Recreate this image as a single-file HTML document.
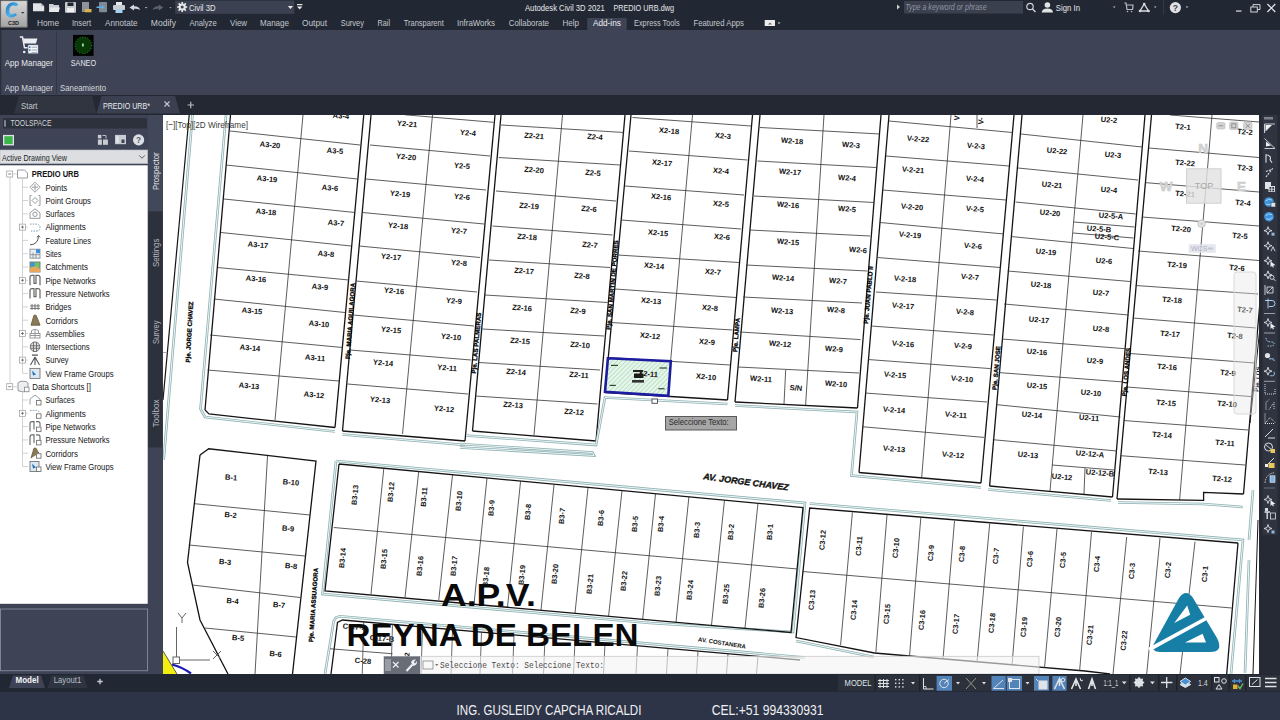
<!DOCTYPE html>
<html><head><meta charset="utf-8"><style>
*{margin:0;padding:0;box-sizing:border-box}
html,body{width:1280px;height:720px;overflow:hidden;background:#22262f;font-family:"Liberation Sans",sans-serif}
.abs{position:absolute}
#title{position:absolute;left:0;top:0;width:1280px;height:30px;background:#222833}
#ribbon{position:absolute;left:0;top:30px;width:1280px;height:64.5px;background:#3e4356}
#tabrow{position:absolute;left:0;top:94.5px;width:1280px;height:20.5px;background:#232833}
#tsp{position:absolute;left:0;top:115px;width:163px;height:559px;background:#3e4356}
.ticon{position:absolute;width:11px;height:10px;border:1px solid #8a8f98;background:#eef1f4;border-radius:1px}
.ticon2{position:absolute;width:11px;height:12px;border:1px solid #8a8f98;background:#fafafa}
.hl{position:absolute;width:5px;height:0;border-top:1px solid #bbb}
.pbox{position:absolute;width:7px;height:7px;border:1px solid #999;background:#fff}
#draw{position:absolute;left:163px;top:115px;width:1096px;height:559px;background:#fff;overflow:hidden}
#rtool{position:absolute;left:1259px;top:115px;width:21px;height:559px;background:#2b2f3a}
#status{position:absolute;left:0;top:674px;width:1280px;height:18px;background:#252932}
#footer{position:absolute;left:0;top:692px;width:1280px;height:28px;background:#2d3343}
</style></head><body>
<div id="title"></div>
<div id="ribbon"></div>
<div id="tabrow"></div>
<div id="tsp"></div>
<div id="draw">
<svg width="1096" height="559" viewBox="163 115 1096 559" style="position:absolute;left:0;top:0;font-family:'Liberation Sans',sans-serif">
<line x1="189.2" y1="115" x2="163" y2="400" stroke="#141414" stroke-width="1.2"/>
<line x1="192.5" y1="115" x2="163.7" y2="460" stroke="#93b0b2" stroke-width="2.6"/>
<line x1="192.5" y1="115" x2="163.7" y2="460" stroke="#e6f7f7" stroke-width="1.0"/>
<line x1="163" y1="352.5" x2="167.5" y2="352.5" stroke="#888" stroke-width="0.7"/>
<line x1="230.5" y1="115" x2="205" y2="410" stroke="#141414" stroke-width="1.3"/>
<line x1="363.75" y1="115" x2="335" y2="427.5" stroke="#141414" stroke-width="1.3"/>
<line x1="303" y1="115" x2="275" y2="420" stroke="#333" stroke-width="0.8"/>
<line x1="230" y1="131" x2="360" y2="145" stroke="#333" stroke-width="0.8"/>
<line x1="226" y1="165" x2="357.5" y2="179" stroke="#333" stroke-width="0.8"/>
<line x1="224" y1="199" x2="355" y2="212.5" stroke="#333" stroke-width="0.8"/>
<line x1="221" y1="232.5" x2="351" y2="246" stroke="#333" stroke-width="0.8"/>
<line x1="217.5" y1="267.5" x2="349" y2="280" stroke="#333" stroke-width="0.8"/>
<line x1="213.75" y1="299" x2="345" y2="312.5" stroke="#333" stroke-width="0.8"/>
<line x1="210" y1="335" x2="342.5" y2="347.5" stroke="#333" stroke-width="0.8"/>
<line x1="207.5" y1="370" x2="339" y2="381" stroke="#333" stroke-width="0.8"/>
<polyline points="205,410 209,414 335,427.5" fill="none" stroke="#141414" stroke-width="1.3"/>
<polyline points="226,115 200.5,409 205,417 335,431.5" fill="none" stroke="#93b0b2" stroke-width="2.6" stroke-linejoin="miter"/>
<polyline points="226,115 200.5,409 205,417 335,431.5" fill="none" stroke="#e6f7f7" stroke-width="1.0" stroke-linejoin="miter"/>
<text x="270" y="145" transform="rotate(5 270 145)" font-size="7.6" font-weight="bold" fill="#111" text-anchor="middle" dominant-baseline="central" >A3-20</text>
<text x="267" y="179" transform="rotate(5 267 179)" font-size="7.6" font-weight="bold" fill="#111" text-anchor="middle" dominant-baseline="central" >A3-19</text>
<text x="266" y="212" transform="rotate(5 266 212)" font-size="7.6" font-weight="bold" fill="#111" text-anchor="middle" dominant-baseline="central" >A3-18</text>
<text x="258" y="245" transform="rotate(5 258 245)" font-size="7.6" font-weight="bold" fill="#111" text-anchor="middle" dominant-baseline="central" >A3-17</text>
<text x="256" y="279" transform="rotate(5 256 279)" font-size="7.6" font-weight="bold" fill="#111" text-anchor="middle" dominant-baseline="central" >A3-16</text>
<text x="252" y="311" transform="rotate(5 252 311)" font-size="7.6" font-weight="bold" fill="#111" text-anchor="middle" dominant-baseline="central" >A3-15</text>
<text x="250" y="348" transform="rotate(5 250 348)" font-size="7.6" font-weight="bold" fill="#111" text-anchor="middle" dominant-baseline="central" >A3-14</text>
<text x="249" y="386" transform="rotate(5 249 386)" font-size="7.6" font-weight="bold" fill="#111" text-anchor="middle" dominant-baseline="central" >A3-13</text>
<text x="341" y="116" transform="rotate(5 341 116)" font-size="7.6" font-weight="bold" fill="#111" text-anchor="middle" dominant-baseline="central" >A3-4</text>
<text x="335" y="151" transform="rotate(5 335 151)" font-size="7.6" font-weight="bold" fill="#111" text-anchor="middle" dominant-baseline="central" >A3-5</text>
<text x="330" y="188" transform="rotate(5 330 188)" font-size="7.6" font-weight="bold" fill="#111" text-anchor="middle" dominant-baseline="central" >A3-6</text>
<text x="336" y="223" transform="rotate(5 336 223)" font-size="7.6" font-weight="bold" fill="#111" text-anchor="middle" dominant-baseline="central" >A3-7</text>
<text x="326" y="254" transform="rotate(5 326 254)" font-size="7.6" font-weight="bold" fill="#111" text-anchor="middle" dominant-baseline="central" >A3-8</text>
<text x="320" y="287" transform="rotate(5 320 287)" font-size="7.6" font-weight="bold" fill="#111" text-anchor="middle" dominant-baseline="central" >A3-9</text>
<text x="319" y="324" transform="rotate(5 319 324)" font-size="7.6" font-weight="bold" fill="#111" text-anchor="middle" dominant-baseline="central" >A3-10</text>
<text x="315" y="358" transform="rotate(5 315 358)" font-size="7.6" font-weight="bold" fill="#111" text-anchor="middle" dominant-baseline="central" >A3-11</text>
<text x="314" y="395" transform="rotate(5 314 395)" font-size="7.6" font-weight="bold" fill="#111" text-anchor="middle" dominant-baseline="central" >A3-12</text>
<line x1="371" y1="115" x2="342.5" y2="431" stroke="#141414" stroke-width="1.3"/>
<line x1="495" y1="115" x2="465" y2="441" stroke="#141414" stroke-width="1.3"/>
<line x1="432.5" y1="115" x2="402.5" y2="434" stroke="#333" stroke-width="0.8"/>
<line x1="405" y1="114.8" x2="493.4" y2="122.3" stroke="#333" stroke-width="0.8"/>
<line x1="370" y1="145" x2="490" y2="156" stroke="#333" stroke-width="0.8"/>
<line x1="366" y1="179" x2="486" y2="190" stroke="#333" stroke-width="0.8"/>
<line x1="362.5" y1="212.5" x2="484" y2="224" stroke="#333" stroke-width="0.8"/>
<line x1="359" y1="246" x2="480" y2="257.5" stroke="#333" stroke-width="0.8"/>
<line x1="356" y1="281" x2="477" y2="292" stroke="#333" stroke-width="0.8"/>
<line x1="353" y1="315" x2="474" y2="326" stroke="#333" stroke-width="0.8"/>
<line x1="350" y1="350" x2="471" y2="360" stroke="#333" stroke-width="0.8"/>
<line x1="347.5" y1="384" x2="468" y2="394" stroke="#333" stroke-width="0.8"/>
<polyline points="342.5,431 465,441" fill="none" stroke="#141414" stroke-width="1.3"/>
<polyline points="342.5,434.5 465,445" fill="none" stroke="#93b0b2" stroke-width="2.6" stroke-linejoin="miter"/>
<polyline points="342.5,434.5 465,445" fill="none" stroke="#e6f7f7" stroke-width="1.0" stroke-linejoin="miter"/>
<text x="407" y="124" transform="rotate(5 407 124)" font-size="7.6" font-weight="bold" fill="#111" text-anchor="middle" dominant-baseline="central" >Y2-21</text>
<text x="468" y="133" transform="rotate(5 468 133)" font-size="7.6" font-weight="bold" fill="#111" text-anchor="middle" dominant-baseline="central" >Y2-4</text>
<text x="406" y="157" transform="rotate(5 406 157)" font-size="7.6" font-weight="bold" fill="#111" text-anchor="middle" dominant-baseline="central" >Y2-20</text>
<text x="462" y="166" transform="rotate(5 462 166)" font-size="7.6" font-weight="bold" fill="#111" text-anchor="middle" dominant-baseline="central" >Y2-5</text>
<text x="400" y="194" transform="rotate(5 400 194)" font-size="7.6" font-weight="bold" fill="#111" text-anchor="middle" dominant-baseline="central" >Y2-19</text>
<text x="462" y="197" transform="rotate(5 462 197)" font-size="7.6" font-weight="bold" fill="#111" text-anchor="middle" dominant-baseline="central" >Y2-6</text>
<text x="398" y="226" transform="rotate(5 398 226)" font-size="7.6" font-weight="bold" fill="#111" text-anchor="middle" dominant-baseline="central" >Y2-18</text>
<text x="459" y="231" transform="rotate(5 459 231)" font-size="7.6" font-weight="bold" fill="#111" text-anchor="middle" dominant-baseline="central" >Y2-7</text>
<text x="391" y="257" transform="rotate(5 391 257)" font-size="7.6" font-weight="bold" fill="#111" text-anchor="middle" dominant-baseline="central" >Y2-17</text>
<text x="459" y="263" transform="rotate(5 459 263)" font-size="7.6" font-weight="bold" fill="#111" text-anchor="middle" dominant-baseline="central" >Y2-8</text>
<text x="394" y="291" transform="rotate(5 394 291)" font-size="7.6" font-weight="bold" fill="#111" text-anchor="middle" dominant-baseline="central" >Y2-16</text>
<text x="454" y="301" transform="rotate(5 454 301)" font-size="7.6" font-weight="bold" fill="#111" text-anchor="middle" dominant-baseline="central" >Y2-9</text>
<text x="391" y="330" transform="rotate(5 391 330)" font-size="7.6" font-weight="bold" fill="#111" text-anchor="middle" dominant-baseline="central" >Y2-15</text>
<text x="451" y="337" transform="rotate(5 451 337)" font-size="7.6" font-weight="bold" fill="#111" text-anchor="middle" dominant-baseline="central" >Y2-10</text>
<text x="383" y="363" transform="rotate(5 383 363)" font-size="7.6" font-weight="bold" fill="#111" text-anchor="middle" dominant-baseline="central" >Y2-14</text>
<text x="447" y="368" transform="rotate(5 447 368)" font-size="7.6" font-weight="bold" fill="#111" text-anchor="middle" dominant-baseline="central" >Y2-11</text>
<text x="380" y="400" transform="rotate(5 380 400)" font-size="7.6" font-weight="bold" fill="#111" text-anchor="middle" dominant-baseline="central" >Y2-13</text>
<text x="444" y="409" transform="rotate(5 444 409)" font-size="7.6" font-weight="bold" fill="#111" text-anchor="middle" dominant-baseline="central" >Y2-12</text>
<line x1="501" y1="115" x2="472.5" y2="431" stroke="#141414" stroke-width="1.3"/>
<line x1="625" y1="115" x2="596" y2="441" stroke="#141414" stroke-width="1.3"/>
<line x1="562.5" y1="115" x2="534" y2="435" stroke="#333" stroke-width="0.8"/>
<line x1="501" y1="125" x2="624" y2="132.5" stroke="#333" stroke-width="0.8"/>
<line x1="498.75" y1="157.5" x2="620" y2="165" stroke="#333" stroke-width="0.8"/>
<line x1="496" y1="191" x2="616" y2="201" stroke="#333" stroke-width="0.8"/>
<line x1="492.5" y1="226" x2="612.5" y2="235" stroke="#333" stroke-width="0.8"/>
<line x1="489" y1="260" x2="610" y2="267.5" stroke="#333" stroke-width="0.8"/>
<line x1="485" y1="295" x2="607.5" y2="302.5" stroke="#333" stroke-width="0.8"/>
<line x1="482.5" y1="329" x2="604" y2="336" stroke="#333" stroke-width="0.8"/>
<line x1="479" y1="362.5" x2="600" y2="370" stroke="#333" stroke-width="0.8"/>
<line x1="475" y1="396" x2="597.5" y2="404" stroke="#333" stroke-width="0.8"/>
<polyline points="472.5,431 596,441" fill="none" stroke="#141414" stroke-width="1.3"/>
<polyline points="466,435.5 596,445 605,397.5 727.5,404" fill="none" stroke="#93b0b2" stroke-width="2.6" stroke-linejoin="miter"/>
<polyline points="466,435.5 596,445 605,397.5 727.5,404" fill="none" stroke="#e6f7f7" stroke-width="1.0" stroke-linejoin="miter"/>
<polyline points="460,444 592.5,452.5 594,455.5 460,447.5" fill="none" stroke="#93b0b2" stroke-width="2.6" stroke-linejoin="miter"/>
<polyline points="460,444 592.5,452.5 594,455.5 460,447.5" fill="none" stroke="#e6f7f7" stroke-width="1.0" stroke-linejoin="miter"/>
<text x="534" y="136" transform="rotate(5 534 136)" font-size="7.6" font-weight="bold" fill="#111" text-anchor="middle" dominant-baseline="central" >Z2-21</text>
<text x="595" y="137" transform="rotate(5 595 137)" font-size="7.6" font-weight="bold" fill="#111" text-anchor="middle" dominant-baseline="central" >Z2-4</text>
<text x="534" y="170" transform="rotate(5 534 170)" font-size="7.6" font-weight="bold" fill="#111" text-anchor="middle" dominant-baseline="central" >Z2-20</text>
<text x="593" y="173" transform="rotate(5 593 173)" font-size="7.6" font-weight="bold" fill="#111" text-anchor="middle" dominant-baseline="central" >Z2-5</text>
<text x="529" y="206" transform="rotate(5 529 206)" font-size="7.6" font-weight="bold" fill="#111" text-anchor="middle" dominant-baseline="central" >Z2-19</text>
<text x="589" y="209" transform="rotate(5 589 209)" font-size="7.6" font-weight="bold" fill="#111" text-anchor="middle" dominant-baseline="central" >Z2-6</text>
<text x="527" y="237" transform="rotate(5 527 237)" font-size="7.6" font-weight="bold" fill="#111" text-anchor="middle" dominant-baseline="central" >Z2-18</text>
<text x="590" y="245" transform="rotate(5 590 245)" font-size="7.6" font-weight="bold" fill="#111" text-anchor="middle" dominant-baseline="central" >Z2-7</text>
<text x="524" y="271" transform="rotate(5 524 271)" font-size="7.6" font-weight="bold" fill="#111" text-anchor="middle" dominant-baseline="central" >Z2-17</text>
<text x="582" y="276" transform="rotate(5 582 276)" font-size="7.6" font-weight="bold" fill="#111" text-anchor="middle" dominant-baseline="central" >Z2-8</text>
<text x="522" y="308" transform="rotate(5 522 308)" font-size="7.6" font-weight="bold" fill="#111" text-anchor="middle" dominant-baseline="central" >Z2-16</text>
<text x="578" y="311" transform="rotate(5 578 311)" font-size="7.6" font-weight="bold" fill="#111" text-anchor="middle" dominant-baseline="central" >Z2-9</text>
<text x="520" y="341" transform="rotate(5 520 341)" font-size="7.6" font-weight="bold" fill="#111" text-anchor="middle" dominant-baseline="central" >Z2-15</text>
<text x="580" y="345" transform="rotate(5 580 345)" font-size="7.6" font-weight="bold" fill="#111" text-anchor="middle" dominant-baseline="central" >Z2-10</text>
<text x="516" y="372" transform="rotate(5 516 372)" font-size="7.6" font-weight="bold" fill="#111" text-anchor="middle" dominant-baseline="central" >Z2-14</text>
<text x="579" y="375" transform="rotate(5 579 375)" font-size="7.6" font-weight="bold" fill="#111" text-anchor="middle" dominant-baseline="central" >Z2-11</text>
<text x="513" y="405" transform="rotate(5 513 405)" font-size="7.6" font-weight="bold" fill="#111" text-anchor="middle" dominant-baseline="central" >Z2-13</text>
<text x="574" y="412" transform="rotate(5 574 412)" font-size="7.6" font-weight="bold" fill="#111" text-anchor="middle" dominant-baseline="central" >Z2-12</text>
<line x1="631" y1="115" x2="605" y2="392.5" stroke="#141414" stroke-width="1.3"/>
<line x1="752.5" y1="115" x2="727.5" y2="400" stroke="#141414" stroke-width="1.3"/>
<line x1="692.5" y1="115" x2="667.5" y2="396" stroke="#333" stroke-width="0.8"/>
<line x1="632.5" y1="117.5" x2="751" y2="126" stroke="#333" stroke-width="0.8"/>
<line x1="629" y1="151" x2="747.5" y2="160" stroke="#333" stroke-width="0.8"/>
<line x1="625" y1="186" x2="744" y2="195" stroke="#333" stroke-width="0.8"/>
<line x1="621" y1="220" x2="741" y2="229" stroke="#333" stroke-width="0.8"/>
<line x1="617.5" y1="255" x2="739" y2="262.5" stroke="#333" stroke-width="0.8"/>
<line x1="615" y1="289" x2="736" y2="297.5" stroke="#333" stroke-width="0.8"/>
<line x1="611" y1="322.5" x2="732.5" y2="330" stroke="#333" stroke-width="0.8"/>
<line x1="609" y1="357.5" x2="730" y2="365" stroke="#333" stroke-width="0.8"/>
<polyline points="605,392.5 727.5,400" fill="none" stroke="#141414" stroke-width="1.3"/>
<text x="669" y="131" transform="rotate(5 669 131)" font-size="7.6" font-weight="bold" fill="#111" text-anchor="middle" dominant-baseline="central" >X2-18</text>
<text x="723" y="136" transform="rotate(5 723 136)" font-size="7.6" font-weight="bold" fill="#111" text-anchor="middle" dominant-baseline="central" >X2-3</text>
<text x="662" y="163" transform="rotate(5 662 163)" font-size="7.6" font-weight="bold" fill="#111" text-anchor="middle" dominant-baseline="central" >X2-17</text>
<text x="721" y="171" transform="rotate(5 721 171)" font-size="7.6" font-weight="bold" fill="#111" text-anchor="middle" dominant-baseline="central" >X2-4</text>
<text x="661" y="197" transform="rotate(5 661 197)" font-size="7.6" font-weight="bold" fill="#111" text-anchor="middle" dominant-baseline="central" >X2-16</text>
<text x="721" y="204" transform="rotate(5 721 204)" font-size="7.6" font-weight="bold" fill="#111" text-anchor="middle" dominant-baseline="central" >X2-5</text>
<text x="658" y="233" transform="rotate(5 658 233)" font-size="7.6" font-weight="bold" fill="#111" text-anchor="middle" dominant-baseline="central" >X2-15</text>
<text x="722" y="237" transform="rotate(5 722 237)" font-size="7.6" font-weight="bold" fill="#111" text-anchor="middle" dominant-baseline="central" >X2-6</text>
<text x="654" y="266" transform="rotate(5 654 266)" font-size="7.6" font-weight="bold" fill="#111" text-anchor="middle" dominant-baseline="central" >X2-14</text>
<text x="713" y="272" transform="rotate(5 713 272)" font-size="7.6" font-weight="bold" fill="#111" text-anchor="middle" dominant-baseline="central" >X2-7</text>
<text x="651" y="301" transform="rotate(5 651 301)" font-size="7.6" font-weight="bold" fill="#111" text-anchor="middle" dominant-baseline="central" >X2-13</text>
<text x="710" y="308" transform="rotate(5 710 308)" font-size="7.6" font-weight="bold" fill="#111" text-anchor="middle" dominant-baseline="central" >X2-8</text>
<text x="650" y="336" transform="rotate(5 650 336)" font-size="7.6" font-weight="bold" fill="#111" text-anchor="middle" dominant-baseline="central" >X2-12</text>
<text x="707" y="342" transform="rotate(5 707 342)" font-size="7.6" font-weight="bold" fill="#111" text-anchor="middle" dominant-baseline="central" >X2-9</text>
<text x="706" y="377" transform="rotate(5 706 377)" font-size="7.6" font-weight="bold" fill="#111" text-anchor="middle" dominant-baseline="central" >X2-10</text>
<line x1="760" y1="115" x2="735" y2="402" stroke="#141414" stroke-width="1.3"/>
<line x1="881" y1="115" x2="857.5" y2="408" stroke="#141414" stroke-width="1.3"/>
<line x1="824" y1="115" x2="805.6" y2="405" stroke="#333" stroke-width="0.8"/>
<line x1="760" y1="127.5" x2="880" y2="134" stroke="#333" stroke-width="0.8"/>
<line x1="757.5" y1="161" x2="876" y2="167.5" stroke="#333" stroke-width="0.8"/>
<line x1="754" y1="196" x2="874" y2="202.5" stroke="#333" stroke-width="0.8"/>
<line x1="750" y1="230" x2="870" y2="236" stroke="#333" stroke-width="0.8"/>
<line x1="746" y1="265" x2="867.5" y2="271" stroke="#333" stroke-width="0.8"/>
<line x1="743" y1="297" x2="862" y2="303" stroke="#333" stroke-width="0.8"/>
<line x1="740" y1="332" x2="860.6" y2="339.6" stroke="#333" stroke-width="0.8"/>
<line x1="738" y1="367" x2="859" y2="373" stroke="#333" stroke-width="0.8"/>
<polyline points="735,402 857.5,408" fill="none" stroke="#141414" stroke-width="1.3"/>
<line x1="785.7" y1="370" x2="784" y2="404" stroke="#333" stroke-width="0.8"/>
<polyline points="735,405.5 857,412 851.5,475.5 981,487.5" fill="none" stroke="#93b0b2" stroke-width="2.6" stroke-linejoin="miter"/>
<polyline points="735,405.5 857,412 851.5,475.5 981,487.5" fill="none" stroke="#e6f7f7" stroke-width="1.0" stroke-linejoin="miter"/>
<text x="792" y="141" transform="rotate(5 792 141)" font-size="7.6" font-weight="bold" fill="#111" text-anchor="middle" dominant-baseline="central" >W2-18</text>
<text x="851" y="145" transform="rotate(5 851 145)" font-size="7.6" font-weight="bold" fill="#111" text-anchor="middle" dominant-baseline="central" >W2-3</text>
<text x="790" y="172" transform="rotate(5 790 172)" font-size="7.6" font-weight="bold" fill="#111" text-anchor="middle" dominant-baseline="central" >W2-17</text>
<text x="847" y="178" transform="rotate(5 847 178)" font-size="7.6" font-weight="bold" fill="#111" text-anchor="middle" dominant-baseline="central" >W2-4</text>
<text x="788" y="205" transform="rotate(5 788 205)" font-size="7.6" font-weight="bold" fill="#111" text-anchor="middle" dominant-baseline="central" >W2-16</text>
<text x="847" y="209" transform="rotate(5 847 209)" font-size="7.6" font-weight="bold" fill="#111" text-anchor="middle" dominant-baseline="central" >W2-5</text>
<text x="788" y="242" transform="rotate(5 788 242)" font-size="7.6" font-weight="bold" fill="#111" text-anchor="middle" dominant-baseline="central" >W2-15</text>
<text x="858" y="250" transform="rotate(5 858 250)" font-size="7.6" font-weight="bold" fill="#111" text-anchor="middle" dominant-baseline="central" >W2-6</text>
<text x="783" y="278" transform="rotate(5 783 278)" font-size="7.6" font-weight="bold" fill="#111" text-anchor="middle" dominant-baseline="central" >W2-14</text>
<text x="838" y="281" transform="rotate(5 838 281)" font-size="7.6" font-weight="bold" fill="#111" text-anchor="middle" dominant-baseline="central" >W2-7</text>
<text x="782" y="311" transform="rotate(5 782 311)" font-size="7.6" font-weight="bold" fill="#111" text-anchor="middle" dominant-baseline="central" >W2-13</text>
<text x="836" y="310" transform="rotate(5 836 310)" font-size="7.6" font-weight="bold" fill="#111" text-anchor="middle" dominant-baseline="central" >W2-8</text>
<text x="780" y="344" transform="rotate(5 780 344)" font-size="7.6" font-weight="bold" fill="#111" text-anchor="middle" dominant-baseline="central" >W2-12</text>
<text x="834" y="349" transform="rotate(5 834 349)" font-size="7.6" font-weight="bold" fill="#111" text-anchor="middle" dominant-baseline="central" >W2-9</text>
<text x="761" y="379" transform="rotate(5 761 379)" font-size="7.6" font-weight="bold" fill="#111" text-anchor="middle" dominant-baseline="central" >W2-11</text>
<text x="796" y="388" transform="rotate(5 796 388)" font-size="7.6" font-weight="bold" fill="#111" text-anchor="middle" dominant-baseline="central" >S/N</text>
<text x="836" y="384" transform="rotate(5 836 384)" font-size="7.6" font-weight="bold" fill="#111" text-anchor="middle" dominant-baseline="central" >W2-10</text>
<line x1="889" y1="115" x2="859" y2="472.5" stroke="#141414" stroke-width="1.3"/>
<line x1="1014" y1="115" x2="981" y2="483" stroke="#141414" stroke-width="1.3"/>
<line x1="951" y1="115" x2="921.7" y2="477" stroke="#333" stroke-width="0.8"/>
<line x1="889" y1="121" x2="1012.5" y2="132.5" stroke="#333" stroke-width="0.8"/>
<line x1="886" y1="156" x2="1009" y2="166" stroke="#333" stroke-width="0.8"/>
<line x1="882.5" y1="190" x2="1006" y2="200" stroke="#333" stroke-width="0.8"/>
<line x1="880" y1="222.5" x2="1004" y2="234" stroke="#333" stroke-width="0.8"/>
<line x1="877.5" y1="257.5" x2="1000" y2="267.5" stroke="#333" stroke-width="0.8"/>
<line x1="876" y1="292" x2="996.6" y2="300" stroke="#333" stroke-width="0.8"/>
<line x1="871" y1="326" x2="993.5" y2="335" stroke="#333" stroke-width="0.8"/>
<line x1="868" y1="359.5" x2="990.5" y2="368.6" stroke="#333" stroke-width="0.8"/>
<line x1="865" y1="393" x2="987" y2="402" stroke="#333" stroke-width="0.8"/>
<line x1="862" y1="426.7" x2="984" y2="437.4" stroke="#333" stroke-width="0.8"/>
<polyline points="859,472.5 981,483" fill="none" stroke="#141414" stroke-width="1.3"/>
<line x1="977" y1="115" x2="977" y2="128" stroke="#333" stroke-width="0.8"/>
<text x="918" y="139" transform="rotate(5 918 139)" font-size="7.6" font-weight="bold" fill="#111" text-anchor="middle" dominant-baseline="central" >V-2-22</text>
<text x="976" y="146" transform="rotate(5 976 146)" font-size="7.6" font-weight="bold" fill="#111" text-anchor="middle" dominant-baseline="central" >V-2-3</text>
<text x="913" y="170" transform="rotate(5 913 170)" font-size="7.6" font-weight="bold" fill="#111" text-anchor="middle" dominant-baseline="central" >V-2-21</text>
<text x="975" y="179" transform="rotate(5 975 179)" font-size="7.6" font-weight="bold" fill="#111" text-anchor="middle" dominant-baseline="central" >V-2-4</text>
<text x="912" y="207" transform="rotate(5 912 207)" font-size="7.6" font-weight="bold" fill="#111" text-anchor="middle" dominant-baseline="central" >V-2-20</text>
<text x="975" y="209" transform="rotate(5 975 209)" font-size="7.6" font-weight="bold" fill="#111" text-anchor="middle" dominant-baseline="central" >V-2-5</text>
<text x="910" y="235" transform="rotate(5 910 235)" font-size="7.6" font-weight="bold" fill="#111" text-anchor="middle" dominant-baseline="central" >V-2-19</text>
<text x="973" y="246" transform="rotate(5 973 246)" font-size="7.6" font-weight="bold" fill="#111" text-anchor="middle" dominant-baseline="central" >V-2-6</text>
<text x="905" y="279" transform="rotate(5 905 279)" font-size="7.6" font-weight="bold" fill="#111" text-anchor="middle" dominant-baseline="central" >V-2-18</text>
<text x="970" y="277" transform="rotate(5 970 277)" font-size="7.6" font-weight="bold" fill="#111" text-anchor="middle" dominant-baseline="central" >V-2-7</text>
<text x="903" y="306" transform="rotate(5 903 306)" font-size="7.6" font-weight="bold" fill="#111" text-anchor="middle" dominant-baseline="central" >V-2-17</text>
<text x="965" y="312" transform="rotate(5 965 312)" font-size="7.6" font-weight="bold" fill="#111" text-anchor="middle" dominant-baseline="central" >V-2-8</text>
<text x="903" y="344" transform="rotate(5 903 344)" font-size="7.6" font-weight="bold" fill="#111" text-anchor="middle" dominant-baseline="central" >V-2-16</text>
<text x="963" y="346" transform="rotate(5 963 346)" font-size="7.6" font-weight="bold" fill="#111" text-anchor="middle" dominant-baseline="central" >V-2-9</text>
<text x="895" y="375" transform="rotate(5 895 375)" font-size="7.6" font-weight="bold" fill="#111" text-anchor="middle" dominant-baseline="central" >V-2-15</text>
<text x="962" y="379" transform="rotate(5 962 379)" font-size="7.6" font-weight="bold" fill="#111" text-anchor="middle" dominant-baseline="central" >V-2-10</text>
<text x="894" y="410" transform="rotate(5 894 410)" font-size="7.6" font-weight="bold" fill="#111" text-anchor="middle" dominant-baseline="central" >V-2-14</text>
<text x="956" y="415" transform="rotate(5 956 415)" font-size="7.6" font-weight="bold" fill="#111" text-anchor="middle" dominant-baseline="central" >V-2-11</text>
<text x="894" y="449" transform="rotate(5 894 449)" font-size="7.6" font-weight="bold" fill="#111" text-anchor="middle" dominant-baseline="central" >V-2-13</text>
<text x="953" y="455" transform="rotate(5 953 455)" font-size="7.6" font-weight="bold" fill="#111" text-anchor="middle" dominant-baseline="central" >V-2-12</text>
<text x="957" y="118" transform="rotate(-85 957 118)" font-size="7.6" font-weight="bold" fill="#111" text-anchor="middle" dominant-baseline="central" >V</text>
<text x="981" y="121" transform="rotate(-85 981 121)" font-size="7.6" font-weight="bold" fill="#111" text-anchor="middle" dominant-baseline="central" >V-</text>
<line x1="1022" y1="115" x2="989.6" y2="486" stroke="#141414" stroke-width="1.3"/>
<line x1="1145" y1="115" x2="1112.5" y2="497" stroke="#141414" stroke-width="1.3"/>
<line x1="1083" y1="115" x2="1050" y2="491" stroke="#333" stroke-width="0.8"/>
<line x1="1021" y1="134" x2="1142" y2="147" stroke="#333" stroke-width="0.8"/>
<line x1="1018" y1="168" x2="1138" y2="180" stroke="#333" stroke-width="0.8"/>
<line x1="1015.6" y1="202" x2="1135.7" y2="214" stroke="#333" stroke-width="0.8"/>
<line x1="1011.7" y1="236.6" x2="1133" y2="248.5" stroke="#333" stroke-width="0.8"/>
<line x1="1007.7" y1="271" x2="1130" y2="281.5" stroke="#333" stroke-width="0.8"/>
<line x1="1004" y1="304" x2="1128.5" y2="315" stroke="#333" stroke-width="0.8"/>
<line x1="1002" y1="339" x2="1125" y2="348.7" stroke="#333" stroke-width="0.8"/>
<line x1="999" y1="372.6" x2="1123.7" y2="382" stroke="#333" stroke-width="0.8"/>
<line x1="996" y1="404.6" x2="1120.5" y2="417" stroke="#333" stroke-width="0.8"/>
<line x1="992.8" y1="439.7" x2="1117" y2="451" stroke="#333" stroke-width="0.8"/>
<polyline points="989.6,486 1112.5,497" fill="none" stroke="#141414" stroke-width="1.3"/>
<line x1="1074" y1="222" x2="1134.5" y2="227" stroke="#333" stroke-width="0.8"/>
<line x1="1073" y1="233" x2="1133.5" y2="238" stroke="#333" stroke-width="0.8"/>
<line x1="1052" y1="465" x2="1114" y2="470" stroke="#333" stroke-width="0.8"/>
<line x1="1085" y1="468" x2="1084" y2="494" stroke="#333" stroke-width="0.8"/>
<polyline points="988,489.5 1111,500.5" fill="none" stroke="#93b0b2" stroke-width="2.6" stroke-linejoin="miter"/>
<polyline points="988,489.5 1111,500.5" fill="none" stroke="#e6f7f7" stroke-width="1.0" stroke-linejoin="miter"/>
<text x="1109" y="120" transform="rotate(5 1109 120)" font-size="7.6" font-weight="bold" fill="#111" text-anchor="middle" dominant-baseline="central" >U2-2</text>
<text x="1057" y="151" transform="rotate(5 1057 151)" font-size="7.6" font-weight="bold" fill="#111" text-anchor="middle" dominant-baseline="central" >U2-22</text>
<text x="1113" y="155" transform="rotate(5 1113 155)" font-size="7.6" font-weight="bold" fill="#111" text-anchor="middle" dominant-baseline="central" >U2-3</text>
<text x="1052" y="185" transform="rotate(5 1052 185)" font-size="7.6" font-weight="bold" fill="#111" text-anchor="middle" dominant-baseline="central" >U2-21</text>
<text x="1109" y="190" transform="rotate(5 1109 190)" font-size="7.6" font-weight="bold" fill="#111" text-anchor="middle" dominant-baseline="central" >U2-4</text>
<text x="1050" y="213" transform="rotate(5 1050 213)" font-size="7.6" font-weight="bold" fill="#111" text-anchor="middle" dominant-baseline="central" >U2-20</text>
<text x="1111" y="216" transform="rotate(5 1111 216)" font-size="7.6" font-weight="bold" fill="#111" text-anchor="middle" dominant-baseline="central" >U2-5-A</text>
<text x="1099" y="229" transform="rotate(5 1099 229)" font-size="7.6" font-weight="bold" fill="#111" text-anchor="middle" dominant-baseline="central" >U2-5-B</text>
<text x="1107" y="237" transform="rotate(5 1107 237)" font-size="7.6" font-weight="bold" fill="#111" text-anchor="middle" dominant-baseline="central" >U2-5-C</text>
<text x="1046" y="252" transform="rotate(5 1046 252)" font-size="7.6" font-weight="bold" fill="#111" text-anchor="middle" dominant-baseline="central" >U2-19</text>
<text x="1104" y="261" transform="rotate(5 1104 261)" font-size="7.6" font-weight="bold" fill="#111" text-anchor="middle" dominant-baseline="central" >U2-6</text>
<text x="1041" y="285" transform="rotate(5 1041 285)" font-size="7.6" font-weight="bold" fill="#111" text-anchor="middle" dominant-baseline="central" >U2-18</text>
<text x="1101" y="293" transform="rotate(5 1101 293)" font-size="7.6" font-weight="bold" fill="#111" text-anchor="middle" dominant-baseline="central" >U2-7</text>
<text x="1039" y="320" transform="rotate(5 1039 320)" font-size="7.6" font-weight="bold" fill="#111" text-anchor="middle" dominant-baseline="central" >U2-17</text>
<text x="1101" y="329" transform="rotate(5 1101 329)" font-size="7.6" font-weight="bold" fill="#111" text-anchor="middle" dominant-baseline="central" >U2-8</text>
<text x="1037" y="352" transform="rotate(5 1037 352)" font-size="7.6" font-weight="bold" fill="#111" text-anchor="middle" dominant-baseline="central" >U2-16</text>
<text x="1095" y="361" transform="rotate(5 1095 361)" font-size="7.6" font-weight="bold" fill="#111" text-anchor="middle" dominant-baseline="central" >U2-9</text>
<text x="1037" y="386" transform="rotate(5 1037 386)" font-size="7.6" font-weight="bold" fill="#111" text-anchor="middle" dominant-baseline="central" >U2-15</text>
<text x="1091" y="393" transform="rotate(5 1091 393)" font-size="7.6" font-weight="bold" fill="#111" text-anchor="middle" dominant-baseline="central" >U2-10</text>
<text x="1032" y="415" transform="rotate(5 1032 415)" font-size="7.6" font-weight="bold" fill="#111" text-anchor="middle" dominant-baseline="central" >U2-14</text>
<text x="1089" y="418" transform="rotate(5 1089 418)" font-size="7.6" font-weight="bold" fill="#111" text-anchor="middle" dominant-baseline="central" >U2-11</text>
<text x="1028" y="455" transform="rotate(5 1028 455)" font-size="7.6" font-weight="bold" fill="#111" text-anchor="middle" dominant-baseline="central" >U2-13</text>
<text x="1090" y="454" transform="rotate(5 1090 454)" font-size="7.6" font-weight="bold" fill="#111" text-anchor="middle" dominant-baseline="central" >U2-12-A</text>
<text x="1062" y="477" transform="rotate(5 1062 477)" font-size="7.6" font-weight="bold" fill="#111" text-anchor="middle" dominant-baseline="central" >U2-12</text>
<text x="1100" y="473" transform="rotate(5 1100 473)" font-size="7.6" font-weight="bold" fill="#111" text-anchor="middle" dominant-baseline="central" >U2-12-B</text>
<line x1="1151.5" y1="115" x2="1117" y2="499" stroke="#141414" stroke-width="1.3"/>
<line x1="1276" y1="115" x2="1243.5" y2="494" stroke="#141414" stroke-width="1.3"/>
<line x1="1212" y1="115" x2="1179.6" y2="500" stroke="#333" stroke-width="0.8"/>
<line x1="1170" y1="115" x2="1259" y2="122" stroke="#333" stroke-width="0.8"/>
<line x1="1149" y1="148" x2="1259" y2="157.5" stroke="#333" stroke-width="0.8"/>
<line x1="1145" y1="182.6" x2="1259" y2="192" stroke="#333" stroke-width="0.8"/>
<line x1="1142" y1="217" x2="1259" y2="226" stroke="#333" stroke-width="0.8"/>
<line x1="1138" y1="251" x2="1259" y2="260.5" stroke="#333" stroke-width="0.8"/>
<line x1="1135.7" y1="285.5" x2="1258" y2="294" stroke="#333" stroke-width="0.8"/>
<line x1="1133" y1="318" x2="1256" y2="328" stroke="#333" stroke-width="0.8"/>
<line x1="1130" y1="353.5" x2="1254.7" y2="363" stroke="#333" stroke-width="0.8"/>
<line x1="1127" y1="387" x2="1251.5" y2="396.6" stroke="#333" stroke-width="0.8"/>
<line x1="1123.7" y1="420.5" x2="1248" y2="430" stroke="#333" stroke-width="0.8"/>
<line x1="1120.5" y1="455.7" x2="1245" y2="465" stroke="#333" stroke-width="0.8"/>
<polyline points="1117,499 1203.6,500.4 1203.6,492.4 1243.5,494" fill="none" stroke="#141414" stroke-width="1.3"/>
<polyline points="1118,502.5 1203,504 1243,507" fill="none" stroke="#93b0b2" stroke-width="2.6" stroke-linejoin="miter"/>
<polyline points="1118,502.5 1203,504 1243,507" fill="none" stroke="#e6f7f7" stroke-width="1.0" stroke-linejoin="miter"/>
<text x="1183" y="127" transform="rotate(5 1183 127)" font-size="7.6" font-weight="bold" fill="#111" text-anchor="middle" dominant-baseline="central" >T2-1</text>
<text x="1245" y="132" transform="rotate(5 1245 132)" font-size="7.6" font-weight="bold" fill="#111" text-anchor="middle" dominant-baseline="central" >T2-2</text>
<text x="1185" y="163" transform="rotate(5 1185 163)" font-size="7.6" font-weight="bold" fill="#111" text-anchor="middle" dominant-baseline="central" >T2-22</text>
<text x="1245" y="168" transform="rotate(5 1245 168)" font-size="7.6" font-weight="bold" fill="#111" text-anchor="middle" dominant-baseline="central" >T2-3</text>
<text x="1185" y="194" transform="rotate(5 1185 194)" font-size="7.6" font-weight="bold" fill="#111" text-anchor="middle" dominant-baseline="central" >T2-21</text>
<text x="1243" y="203" transform="rotate(5 1243 203)" font-size="7.6" font-weight="bold" fill="#111" text-anchor="middle" dominant-baseline="central" >T2-4</text>
<text x="1181" y="229" transform="rotate(5 1181 229)" font-size="7.6" font-weight="bold" fill="#111" text-anchor="middle" dominant-baseline="central" >T2-20</text>
<text x="1240" y="236" transform="rotate(5 1240 236)" font-size="7.6" font-weight="bold" fill="#111" text-anchor="middle" dominant-baseline="central" >T2-5</text>
<text x="1177" y="265" transform="rotate(5 1177 265)" font-size="7.6" font-weight="bold" fill="#111" text-anchor="middle" dominant-baseline="central" >T2-19</text>
<text x="1237" y="268" transform="rotate(5 1237 268)" font-size="7.6" font-weight="bold" fill="#111" text-anchor="middle" dominant-baseline="central" >T2-6</text>
<text x="1172" y="300" transform="rotate(5 1172 300)" font-size="7.6" font-weight="bold" fill="#111" text-anchor="middle" dominant-baseline="central" >T2-18</text>
<text x="1245" y="310" transform="rotate(5 1245 310)" font-size="7.6" font-weight="bold" fill="#111" text-anchor="middle" dominant-baseline="central" >T2-7</text>
<text x="1170" y="334" transform="rotate(5 1170 334)" font-size="7.6" font-weight="bold" fill="#111" text-anchor="middle" dominant-baseline="central" >T2-17</text>
<text x="1235" y="336" transform="rotate(5 1235 336)" font-size="7.6" font-weight="bold" fill="#111" text-anchor="middle" dominant-baseline="central" >T2-8</text>
<text x="1167" y="367" transform="rotate(5 1167 367)" font-size="7.6" font-weight="bold" fill="#111" text-anchor="middle" dominant-baseline="central" >T2-16</text>
<text x="1228" y="373" transform="rotate(5 1228 373)" font-size="7.6" font-weight="bold" fill="#111" text-anchor="middle" dominant-baseline="central" >T2-9</text>
<text x="1166" y="403" transform="rotate(5 1166 403)" font-size="7.6" font-weight="bold" fill="#111" text-anchor="middle" dominant-baseline="central" >T2-15</text>
<text x="1227" y="404" transform="rotate(5 1227 404)" font-size="7.6" font-weight="bold" fill="#111" text-anchor="middle" dominant-baseline="central" >T2-10</text>
<text x="1162" y="435" transform="rotate(5 1162 435)" font-size="7.6" font-weight="bold" fill="#111" text-anchor="middle" dominant-baseline="central" >T2-14</text>
<text x="1225" y="443" transform="rotate(5 1225 443)" font-size="7.6" font-weight="bold" fill="#111" text-anchor="middle" dominant-baseline="central" >T2-11</text>
<text x="1158" y="472" transform="rotate(5 1158 472)" font-size="7.6" font-weight="bold" fill="#111" text-anchor="middle" dominant-baseline="central" >T2-13</text>
<text x="1222" y="479" transform="rotate(5 1222 479)" font-size="7.6" font-weight="bold" fill="#111" text-anchor="middle" dominant-baseline="central" >T2-12</text>
<line x1="1253" y1="490" x2="1249" y2="540" stroke="#93b0b2" stroke-width="2.6"/>
<line x1="1253" y1="490" x2="1249" y2="540" stroke="#e6f7f7" stroke-width="1.0"/>
<line x1="1249" y1="560" x2="1245" y2="673" stroke="#93b0b2" stroke-width="2.6"/>
<line x1="1249" y1="560" x2="1245" y2="673" stroke="#e6f7f7" stroke-width="1.0"/>
<line x1="1262" y1="308" x2="1250" y2="423" stroke="#141414" stroke-width="1"/>
<line x1="1258" y1="520" x2="1253" y2="674" stroke="#141414" stroke-width="1"/>
<text x="1257" y="379" transform="rotate(-85 1257 379)" font-size="6.2" font-weight="bold" fill="#000" text-anchor="middle" dominant-baseline="central" >Pje. LOS</text>
<polyline points="200,455 208.75,448.75 316,461 292.5,674" fill="none" stroke="#141414" stroke-width="1.3"/>
<polyline points="200,455 187.5,562.5 200,620 228,674" fill="none" stroke="#141414" stroke-width="1.3"/>
<line x1="267.5" y1="456" x2="255" y2="674" stroke="#333" stroke-width="0.8"/>
<line x1="195" y1="503.75" x2="310" y2="515" stroke="#333" stroke-width="0.8"/>
<line x1="188.75" y1="545" x2="305" y2="556" stroke="#333" stroke-width="0.8"/>
<line x1="192.5" y1="585" x2="300" y2="597.5" stroke="#333" stroke-width="0.8"/>
<line x1="205" y1="628" x2="296" y2="637" stroke="#333" stroke-width="0.8"/>
<text x="231" y="477.5" transform="rotate(5 231 477.5)" font-size="7.6" font-weight="bold" fill="#111" text-anchor="middle" dominant-baseline="central" >B-1</text>
<text x="291" y="482.5" transform="rotate(5 291 482.5)" font-size="7.6" font-weight="bold" fill="#111" text-anchor="middle" dominant-baseline="central" >B-10</text>
<text x="230.5" y="515" transform="rotate(5 230.5 515)" font-size="7.6" font-weight="bold" fill="#111" text-anchor="middle" dominant-baseline="central" >B-2</text>
<text x="288" y="528.5" transform="rotate(5 288 528.5)" font-size="7.6" font-weight="bold" fill="#111" text-anchor="middle" dominant-baseline="central" >B-9</text>
<text x="225" y="562" transform="rotate(5 225 562)" font-size="7.6" font-weight="bold" fill="#111" text-anchor="middle" dominant-baseline="central" >B-3</text>
<text x="291" y="566" transform="rotate(5 291 566)" font-size="7.6" font-weight="bold" fill="#111" text-anchor="middle" dominant-baseline="central" >B-8</text>
<text x="232.5" y="601" transform="rotate(5 232.5 601)" font-size="7.6" font-weight="bold" fill="#111" text-anchor="middle" dominant-baseline="central" >B-4</text>
<text x="279" y="605" transform="rotate(5 279 605)" font-size="7.6" font-weight="bold" fill="#111" text-anchor="middle" dominant-baseline="central" >B-7</text>
<text x="238" y="638" transform="rotate(5 238 638)" font-size="7.6" font-weight="bold" fill="#111" text-anchor="middle" dominant-baseline="central" >B-5</text>
<text x="275.5" y="654" transform="rotate(5 275.5 654)" font-size="7.6" font-weight="bold" fill="#111" text-anchor="middle" dominant-baseline="central" >B-6</text>
<polyline points="336,461 805,503 793,632 650,623 322.5,594 336,461" fill="none" stroke="#93b0b2" stroke-width="2.6" stroke-linejoin="miter"/>
<polyline points="336,461 805,503 793,632 650,623 322.5,594 336,461" fill="none" stroke="#e6f7f7" stroke-width="1.0" stroke-linejoin="miter"/>
<polyline points="339,464 803,507.5 791,632.5 325,591 339,464" fill="none" stroke="#141414" stroke-width="1.3"/>
<line x1="333.75" y1="527.5" x2="797.6" y2="569" stroke="#333" stroke-width="0.8"/>
<line x1="383.75" y1="469" x2="371" y2="594" stroke="#333" stroke-width="0.8"/>
<line x1="418.75" y1="471" x2="405" y2="597.5" stroke="#333" stroke-width="0.8"/>
<line x1="452.5" y1="475" x2="438.75" y2="600" stroke="#333" stroke-width="0.8"/>
<line x1="487" y1="478" x2="474" y2="604" stroke="#333" stroke-width="0.8"/>
<line x1="520.6" y1="481" x2="507.5" y2="607" stroke="#333" stroke-width="0.8"/>
<line x1="554" y1="485" x2="541" y2="610" stroke="#333" stroke-width="0.8"/>
<line x1="588" y1="488" x2="575" y2="613" stroke="#333" stroke-width="0.8"/>
<line x1="622" y1="490.6" x2="608.6" y2="616" stroke="#333" stroke-width="0.8"/>
<line x1="655.6" y1="493" x2="642.7" y2="619" stroke="#333" stroke-width="0.8"/>
<line x1="689" y1="496" x2="676" y2="622" stroke="#333" stroke-width="0.8"/>
<line x1="724.5" y1="500" x2="711.5" y2="625" stroke="#333" stroke-width="0.8"/>
<line x1="758" y1="503" x2="745" y2="628" stroke="#333" stroke-width="0.8"/>
<text x="355" y="495" transform="rotate(-85 355 495)" font-size="7.4" font-weight="bold" fill="#111" text-anchor="middle" dominant-baseline="central" >B3-13</text>
<text x="391" y="492" transform="rotate(-85 391 492)" font-size="7.4" font-weight="bold" fill="#111" text-anchor="middle" dominant-baseline="central" >B3-12</text>
<text x="424" y="497" transform="rotate(-85 424 497)" font-size="7.4" font-weight="bold" fill="#111" text-anchor="middle" dominant-baseline="central" >B3-11</text>
<text x="459" y="501" transform="rotate(-85 459 501)" font-size="7.4" font-weight="bold" fill="#111" text-anchor="middle" dominant-baseline="central" >B3-10</text>
<text x="491.5" y="508" transform="rotate(-85 491.5 508)" font-size="7.4" font-weight="bold" fill="#111" text-anchor="middle" dominant-baseline="central" >B3-9</text>
<text x="528" y="512" transform="rotate(-85 528 512)" font-size="7.4" font-weight="bold" fill="#111" text-anchor="middle" dominant-baseline="central" >B3-8</text>
<text x="562" y="516" transform="rotate(-85 562 516)" font-size="7.4" font-weight="bold" fill="#111" text-anchor="middle" dominant-baseline="central" >B3-7</text>
<text x="601" y="518" transform="rotate(-85 601 518)" font-size="7.4" font-weight="bold" fill="#111" text-anchor="middle" dominant-baseline="central" >B3-6</text>
<text x="635" y="524" transform="rotate(-85 635 524)" font-size="7.4" font-weight="bold" fill="#111" text-anchor="middle" dominant-baseline="central" >B3-5</text>
<text x="661" y="524" transform="rotate(-85 661 524)" font-size="7.4" font-weight="bold" fill="#111" text-anchor="middle" dominant-baseline="central" >B3-4</text>
<text x="697" y="530" transform="rotate(-85 697 530)" font-size="7.4" font-weight="bold" fill="#111" text-anchor="middle" dominant-baseline="central" >B3-3</text>
<text x="731" y="532" transform="rotate(-85 731 532)" font-size="7.4" font-weight="bold" fill="#111" text-anchor="middle" dominant-baseline="central" >B3-2</text>
<text x="770" y="532" transform="rotate(-85 770 532)" font-size="7.4" font-weight="bold" fill="#111" text-anchor="middle" dominant-baseline="central" >B3-1</text>
<text x="342.5" y="558" transform="rotate(-85 342.5 558)" font-size="7.4" font-weight="bold" fill="#111" text-anchor="middle" dominant-baseline="central" >B3-14</text>
<text x="384" y="559" transform="rotate(-85 384 559)" font-size="7.4" font-weight="bold" fill="#111" text-anchor="middle" dominant-baseline="central" >B3-15</text>
<text x="420" y="566" transform="rotate(-85 420 566)" font-size="7.4" font-weight="bold" fill="#111" text-anchor="middle" dominant-baseline="central" >B3-16</text>
<text x="454" y="566" transform="rotate(-85 454 566)" font-size="7.4" font-weight="bold" fill="#111" text-anchor="middle" dominant-baseline="central" >B3-17</text>
<text x="486" y="577" transform="rotate(-85 486 577)" font-size="7.4" font-weight="bold" fill="#111" text-anchor="middle" dominant-baseline="central" >B3-18</text>
<text x="522" y="575" transform="rotate(-85 522 575)" font-size="7.4" font-weight="bold" fill="#111" text-anchor="middle" dominant-baseline="central" >B3-19</text>
<text x="555" y="574" transform="rotate(-85 555 574)" font-size="7.4" font-weight="bold" fill="#111" text-anchor="middle" dominant-baseline="central" >B3-20</text>
<text x="590" y="584" transform="rotate(-85 590 584)" font-size="7.4" font-weight="bold" fill="#111" text-anchor="middle" dominant-baseline="central" >B3-21</text>
<text x="624" y="581" transform="rotate(-85 624 581)" font-size="7.4" font-weight="bold" fill="#111" text-anchor="middle" dominant-baseline="central" >B3-22</text>
<text x="658" y="586" transform="rotate(-85 658 586)" font-size="7.4" font-weight="bold" fill="#111" text-anchor="middle" dominant-baseline="central" >B3-23</text>
<text x="690" y="590" transform="rotate(-85 690 590)" font-size="7.4" font-weight="bold" fill="#111" text-anchor="middle" dominant-baseline="central" >B3-24</text>
<text x="726" y="594" transform="rotate(-85 726 594)" font-size="7.4" font-weight="bold" fill="#111" text-anchor="middle" dominant-baseline="central" >B3-25</text>
<text x="762" y="598" transform="rotate(-85 762 598)" font-size="7.4" font-weight="bold" fill="#111" text-anchor="middle" dominant-baseline="central" >B3-26</text>
<polyline points="809.7,503.5 1243,540 1231,674" fill="none" stroke="#93b0b2" stroke-width="2.6" stroke-linejoin="miter"/>
<polyline points="809.7,503.5 1243,540 1231,674" fill="none" stroke="#e6f7f7" stroke-width="1.0" stroke-linejoin="miter"/>
<polyline points="1238,543 809.7,508 796,637.6 874.4,653 1085,671 1110,674" fill="none" stroke="#141414" stroke-width="1.3"/>
<line x1="1238" y1="543" x2="1226.7" y2="674" stroke="#141414" stroke-width="1.3"/>
<polyline points="796,641 874,657" fill="none" stroke="#93b0b2" stroke-width="2.6" stroke-linejoin="miter"/>
<polyline points="796,641 874,657" fill="none" stroke="#e6f7f7" stroke-width="1.0" stroke-linejoin="miter"/>
<line x1="802.7" y1="571.5" x2="1231.7" y2="608" stroke="#333" stroke-width="0.8"/>
<line x1="852.4" y1="512.5" x2="840.6" y2="645" stroke="#333" stroke-width="0.8"/>
<line x1="887" y1="515" x2="875.8" y2="653" stroke="#333" stroke-width="0.8"/>
<line x1="920.8" y1="518" x2="909.5" y2="656" stroke="#333" stroke-width="0.8"/>
<line x1="954.5" y1="521" x2="943" y2="659" stroke="#333" stroke-width="0.8"/>
<line x1="989.7" y1="523.7" x2="977" y2="662" stroke="#333" stroke-width="0.8"/>
<line x1="1023.4" y1="526.6" x2="1012" y2="665" stroke="#333" stroke-width="0.8"/>
<line x1="1057" y1="529" x2="1044.5" y2="668" stroke="#333" stroke-width="0.8"/>
<line x1="1091.5" y1="532" x2="1079.6" y2="671" stroke="#333" stroke-width="0.8"/>
<line x1="1126.7" y1="537" x2="1113" y2="674" stroke="#333" stroke-width="0.8"/>
<line x1="1160" y1="538" x2="1146.7" y2="674" stroke="#333" stroke-width="0.8"/>
<line x1="1195" y1="541.7" x2="1180" y2="674" stroke="#333" stroke-width="0.8"/>
<text x="822.6" y="540" transform="rotate(-85 822.6 540)" font-size="7.4" font-weight="bold" fill="#111" text-anchor="middle" dominant-baseline="central" >C3-12</text>
<text x="859" y="546" transform="rotate(-85 859 546)" font-size="7.4" font-weight="bold" fill="#111" text-anchor="middle" dominant-baseline="central" >C3-11</text>
<text x="896" y="548" transform="rotate(-85 896 548)" font-size="7.4" font-weight="bold" fill="#111" text-anchor="middle" dominant-baseline="central" >C3-10</text>
<text x="931" y="553" transform="rotate(-85 931 553)" font-size="7.4" font-weight="bold" fill="#111" text-anchor="middle" dominant-baseline="central" >C3-9</text>
<text x="962" y="554" transform="rotate(-85 962 554)" font-size="7.4" font-weight="bold" fill="#111" text-anchor="middle" dominant-baseline="central" >C3-8</text>
<text x="996" y="556" transform="rotate(-85 996 556)" font-size="7.4" font-weight="bold" fill="#111" text-anchor="middle" dominant-baseline="central" >C3-7</text>
<text x="1030" y="559" transform="rotate(-85 1030 559)" font-size="7.4" font-weight="bold" fill="#111" text-anchor="middle" dominant-baseline="central" >C3-6</text>
<text x="1063" y="560" transform="rotate(-85 1063 560)" font-size="7.4" font-weight="bold" fill="#111" text-anchor="middle" dominant-baseline="central" >C3-5</text>
<text x="1097" y="564" transform="rotate(-85 1097 564)" font-size="7.4" font-weight="bold" fill="#111" text-anchor="middle" dominant-baseline="central" >C3-4</text>
<text x="1132" y="571" transform="rotate(-85 1132 571)" font-size="7.4" font-weight="bold" fill="#111" text-anchor="middle" dominant-baseline="central" >C3-3</text>
<text x="1168" y="570" transform="rotate(-85 1168 570)" font-size="7.4" font-weight="bold" fill="#111" text-anchor="middle" dominant-baseline="central" >C3-2</text>
<text x="1205" y="574" transform="rotate(-85 1205 574)" font-size="7.4" font-weight="bold" fill="#111" text-anchor="middle" dominant-baseline="central" >C3-1</text>
<text x="812" y="600" transform="rotate(-85 812 600)" font-size="7.4" font-weight="bold" fill="#111" text-anchor="middle" dominant-baseline="central" >C3-13</text>
<text x="854" y="610" transform="rotate(-85 854 610)" font-size="7.4" font-weight="bold" fill="#111" text-anchor="middle" dominant-baseline="central" >C3-14</text>
<text x="887" y="614" transform="rotate(-85 887 614)" font-size="7.4" font-weight="bold" fill="#111" text-anchor="middle" dominant-baseline="central" >C3-15</text>
<text x="922" y="620" transform="rotate(-85 922 620)" font-size="7.4" font-weight="bold" fill="#111" text-anchor="middle" dominant-baseline="central" >C3-16</text>
<text x="956" y="624" transform="rotate(-85 956 624)" font-size="7.4" font-weight="bold" fill="#111" text-anchor="middle" dominant-baseline="central" >C3-17</text>
<text x="992" y="623" transform="rotate(-85 992 623)" font-size="7.4" font-weight="bold" fill="#111" text-anchor="middle" dominant-baseline="central" >C3-18</text>
<text x="1024" y="627" transform="rotate(-85 1024 627)" font-size="7.4" font-weight="bold" fill="#111" text-anchor="middle" dominant-baseline="central" >C3-19</text>
<text x="1058" y="627" transform="rotate(-85 1058 627)" font-size="7.4" font-weight="bold" fill="#111" text-anchor="middle" dominant-baseline="central" >C3-20</text>
<text x="1090" y="635" transform="rotate(-85 1090 635)" font-size="7.4" font-weight="bold" fill="#111" text-anchor="middle" dominant-baseline="central" >C3-21</text>
<text x="1124" y="640.5" transform="rotate(-85 1124 640.5)" font-size="7.4" font-weight="bold" fill="#111" text-anchor="middle" dominant-baseline="central" >C3-22</text>
<polyline points="325,674 333.75,621 336,617.5 340,616.25 805,657.5" fill="none" stroke="#93b0b2" stroke-width="2.6" stroke-linejoin="miter"/>
<polyline points="325,674 333.75,621 336,617.5 340,616.25 805,657.5" fill="none" stroke="#e6f7f7" stroke-width="1.0" stroke-linejoin="miter"/>
<polyline points="331,674 337.5,622.5 342.5,620 800,660" fill="none" stroke="#141414" stroke-width="1.3"/>
<line x1="330" y1="648.75" x2="392.5" y2="653.75" stroke="#333" stroke-width="0.8"/>
<line x1="363.75" y1="621.87" x2="362.25" y2="674" stroke="#444" stroke-width="0.8"/>
<line x1="392.5" y1="624.4" x2="391.0" y2="674" stroke="#444" stroke-width="0.8"/>
<line x1="422.5" y1="627.04" x2="421.0" y2="674" stroke="#444" stroke-width="0.8"/>
<line x1="452.5" y1="629.68" x2="451.0" y2="674" stroke="#444" stroke-width="0.8"/>
<line x1="481.5" y1="632.232" x2="480.0" y2="674" stroke="#444" stroke-width="0.8"/>
<line x1="514" y1="635.092" x2="512.5" y2="674" stroke="#444" stroke-width="0.8"/>
<line x1="545" y1="637.82" x2="543.5" y2="674" stroke="#444" stroke-width="0.8"/>
<line x1="575" y1="640.46" x2="573.5" y2="674" stroke="#444" stroke-width="0.8"/>
<line x1="605" y1="643.1" x2="603.5" y2="674" stroke="#444" stroke-width="0.8"/>
<line x1="637.5" y1="645.96" x2="636.0" y2="674" stroke="#444" stroke-width="0.8"/>
<line x1="668" y1="648.644" x2="666.5" y2="674" stroke="#444" stroke-width="0.8"/>
<line x1="698" y1="651.284" x2="696.5" y2="674" stroke="#444" stroke-width="0.8"/>
<line x1="728" y1="653.924" x2="726.5" y2="674" stroke="#444" stroke-width="0.8"/>
<line x1="758" y1="656.564" x2="756.5" y2="674" stroke="#444" stroke-width="0.8"/>
<text x="355" y="627" transform="rotate(5 355 627)" font-size="7.6" font-weight="bold" fill="#111" text-anchor="middle" dominant-baseline="central" >C-17-A</text>
<text x="382" y="638.5" transform="rotate(5 382 638.5)" font-size="7.6" font-weight="bold" fill="#111" text-anchor="middle" dominant-baseline="central" >C-17-B</text>
<text x="363" y="661" transform="rotate(5 363 661)" font-size="7.6" font-weight="bold" fill="#111" text-anchor="middle" dominant-baseline="central" >C-28</text>
<text x="406.5" y="658" transform="rotate(-85 406.5 658)" font-size="7" font-weight="bold" fill="#111" text-anchor="middle" dominant-baseline="central" >C-2</text>
<text x="746" y="482" transform="rotate(7.5 746 482)" font-size="8.8" font-weight="bold" fill="#111" text-anchor="middle" dominant-baseline="central" textLength="86" lengthAdjust="spacingAndGlyphs" font-style="italic" stroke="#111" stroke-width="0.35">AV. JORGE CHAVEZ</text>
<text x="722" y="643" transform="rotate(9 722 643)" font-size="6" font-weight="bold" fill="#111" text-anchor="middle" dominant-baseline="central" >AV. COSTANERA</text>
<text x="189" y="332" transform="rotate(-87 189 332)" font-size="6.2" font-weight="bold" fill="#000" text-anchor="middle" dominant-baseline="central" stroke="#000" stroke-width="0.3">Pje. JORGE CHAVEZ</text>
<text x="350" y="321" transform="rotate(-86 350 321)" font-size="6.2" font-weight="bold" fill="#000" text-anchor="middle" dominant-baseline="central" stroke="#000" stroke-width="0.3">Pje. MARIA AGUILAGORA</text>
<text x="476" y="343" transform="rotate(-85 476 343)" font-size="6.2" font-weight="bold" fill="#000" text-anchor="middle" dominant-baseline="central" stroke="#000" stroke-width="0.3">Pje. LAS PALMERAS</text>
<text x="612" y="285" transform="rotate(-85 612 285)" font-size="6.2" font-weight="bold" fill="#000" text-anchor="middle" dominant-baseline="central" stroke="#000" stroke-width="0.3">Pje. SAN MARTIN DE PORRES</text>
<text x="736" y="335" transform="rotate(-85 736 335)" font-size="6.2" font-weight="bold" fill="#000" text-anchor="middle" dominant-baseline="central" stroke="#000" stroke-width="0.3">Pje. LAMPA</text>
<text x="868" y="295" transform="rotate(-85 868 295)" font-size="6.2" font-weight="bold" fill="#000" text-anchor="middle" dominant-baseline="central" stroke="#000" stroke-width="0.3">Pje. JUAN PABLO II</text>
<text x="996" y="368" transform="rotate(-85 996 368)" font-size="6.2" font-weight="bold" fill="#000" text-anchor="middle" dominant-baseline="central" stroke="#000" stroke-width="0.3">Pje. SAN JOSE</text>
<text x="1126" y="372" transform="rotate(-85 1126 372)" font-size="6.2" font-weight="bold" fill="#000" text-anchor="middle" dominant-baseline="central" stroke="#000" stroke-width="0.3">Pje. LOS ANDES</text>
<text x="313" y="605" transform="rotate(-86 313 605)" font-size="6.2" font-weight="bold" fill="#000" text-anchor="middle" dominant-baseline="central" stroke="#000" stroke-width="0.3">Pje. MARIA ASSUAGORA</text>
<defs><pattern id="hatch" width="3.2" height="3.2" patternUnits="userSpaceOnUse" patternTransform="rotate(45)"><rect width="3.2" height="3.2" fill="#e6f4ee"/><line x1="0" y1="0" x2="0" y2="3.2" stroke="#8fcf8a" stroke-width="0.9"/></pattern></defs>
<polygon points="607.9,358.3 670.8,361.25 668.3,395.8 605,391.7" fill="url(#hatch)" stroke="#1c1ca0" stroke-width="2.6"/>
<text x="648" y="374" transform="rotate(5 648 374)" font-size="7.6" font-weight="bold" fill="#111" text-anchor="middle" dominant-baseline="central" >X2-11</text>
<rect x="633" y="370" width="10" height="2" fill="#222"/><rect x="634" y="373.5" width="9.5" height="4.5" fill="#1a1a1a"/><rect x="632" y="380" width="12" height="2.6" fill="#333"/>
<line x1="611" y1="365.4" x2="618" y2="365.4" stroke="#2d4a2d" stroke-width="1.2"/>
<line x1="659.6" y1="368" x2="667" y2="368" stroke="#2d4a2d" stroke-width="1.2"/>
<line x1="609.6" y1="385.4" x2="615.8" y2="385.4" stroke="#2d4a2d" stroke-width="1.2"/>
<line x1="658.3" y1="388.75" x2="664.6" y2="388.75" stroke="#2d4a2d" stroke-width="1.2"/>
<rect x="652" y="399" width="5.5" height="4.3" fill="#fff" stroke="#444" stroke-width="0.9"/>
<rect x="665.5" y="416.5" width="71" height="13.5" fill="#a6a6a6" stroke="#5a5a5a" stroke-width="1"/>
<text x="668.7" y="425.4" font-size="9.2" fill="#2a2a2a" textLength="60" lengthAdjust="spacingAndGlyphs">Seleccione Texto:</text>
<text x="441" y="606" font-size="30.5" font-weight="bold" fill="#0a0a0a" textLength="95" lengthAdjust="spacingAndGlyphs">A.P.V.</text>
<text x="346.5" y="646" font-size="30.5" font-weight="bold" fill="#0a0a0a" textLength="292" lengthAdjust="spacingAndGlyphs">REYNA DE BELEN</text>
<path d="M1179,598 Q1186,588 1193,598 L1217,638 Q1224,652 1210,652 L1160,652 Q1151,652 1153.5,644.5 Z" fill="#177ea6"/>
<path d="M1187.2,605.4 L1174.2,623.1 L1190.2,614.8 Z" fill="#fff"/>
<path d="M1185,642.6 L1202.6,633.7 L1206,642.6 Z" fill="#fff"/>
<path d="M1148,648 L1206,616.5 L1207.8,619.6 L1150,651.2 Z" fill="#fff"/>
<g stroke="#666" stroke-width="1" fill="none"><line x1="176.5" y1="627" x2="176.5" y2="657"/><line x1="180" y1="660" x2="210" y2="660"/><rect x="173" y="657" width="6.5" height="6.5"/><line x1="213" y1="651" x2="221" y2="659"/><line x1="221" y1="651" x2="213" y2="659"/><path d="M178,613 L182,618 L186,613 M182,618 L182,623"/></g>
<path d="M163,651 L163,674 L177,674 Z" fill="#f2ee10"/><path d="M163,651 L177,674" stroke="#333" stroke-width="0.8"/><path d="M172,664.5 Q182,667 191,673.5" stroke="#1a1ab0" stroke-width="2.3" fill="none"/>
<text x="166" y="128.3" font-size="9.6" fill="#3a3a3a" textLength="82" lengthAdjust="spacingAndGlyphs">[−][Top][2D Wireframe]</text>
<g font-family="Liberation Sans" font-weight="bold" fill="#d6d6d6" stroke="#c4c4c4" stroke-width="0.5" font-size="13.5" text-anchor="middle" dominant-baseline="central">
<text x="1203" y="148">N</text><text x="1166" y="186">W</text><text x="1241.5" y="186">E</text></g>
<circle cx="1201.6" cy="223.7" r="3.5" fill="#e6e6e6" stroke="#c8c8c8" stroke-width="1.2"/><circle cx="1201.6" cy="223.7" r="1.2" fill="#c8c8c8"/>
<rect x="1186.6" y="168.8" width="34.4" height="34.4" fill="#e2e2e2" fill-opacity="0.82" stroke="#cfcfcf"/>
<text x="1204" y="186" font-size="9" fill="#a9a9a9" text-anchor="middle" dominant-baseline="central">TOP</text>
<rect x="1188.7" y="244.2" width="27" height="8.6" fill="#dfe0ea" fill-opacity="0.8"/>
<text x="1191" y="248.7" font-size="7" fill="#b0b2c4" dominant-baseline="central">WCS</text><rect x="1208" y="247.5" width="5" height="2" fill="#c4c6d6"/>
<rect x="1234" y="272" width="22" height="142" rx="3" fill="#e6e6e6" fill-opacity="0.38" stroke="#d9d9d9"/>
<g fill="#d4d4d4" stroke="#b9b9b9" stroke-width="0.6"><rect x="1216.7" y="122.5" width="8.3" height="6.5" rx="1.5"/><rect x="1229.6" y="122" width="8.4" height="7.5" rx="1.5"/><rect x="1243.6" y="122" width="8.4" height="7.5" rx="1.5"/></g>
<g stroke="#8f8f8f" stroke-width="1" fill="none"><line x1="1218.5" y1="125.8" x2="1223.2" y2="125.8"/><rect x="1231.8" y="123.8" width="4" height="4"/><path d="M1245.8,123.8 L1249.8,127.8 M1249.8,123.8 L1245.8,127.8"/></g>
<rect x="420" y="656.3" width="619" height="17.7" fill="#f4f4f4" fill-opacity="0.6" stroke="#c8c8c8" stroke-width="0.8"/>
<rect x="383.75" y="656.3" width="36.25" height="17.7" fill="#686d78"/>
<g fill="#c9ccd3"><rect x="385.5" y="659" width="1" height="12"/><rect x="387.5" y="659" width="1" height="12"/><rect x="389.5" y="659" width="1" height="12"/></g>
<path d="M393,662 L398.5,667.5 M398.5,662 L393,667.5" stroke="#eef0f3" stroke-width="1.2"/>
<path d="M406.5,671 L412.5,664.5" stroke="#eef0f3" stroke-width="2"/><path d="M411,662.5 Q412,659 416,659.5 L413.8,662 L415,663.5 L417,661 Q417.5,665 413.5,666 Z" fill="#eef0f3"/>
<rect x="423" y="661" width="10" height="8" fill="none" stroke="#888" stroke-width="0.8"/><path d="M435,664 L438.5,664 L436.75,666 Z" fill="#777"/>
<text x="440" y="666" font-family="Liberation Mono" font-size="9" fill="#4a4a4a" dominant-baseline="central" textLength="164" lengthAdjust="spacingAndGlyphs">Seleccione Texto: Seleccione Texto:</text>
</svg>
</div>
<svg width="1280" height="720" style="position:absolute;left:0;top:0;pointer-events:none">
<defs><linearGradient id="lg1" x1="0" y1="0" x2="0" y2="1"><stop offset="0" stop-color="#d9d9d9"/><stop offset="1" stop-color="#a3a3a3"/></linearGradient></defs>
<rect x="0.7" y="0.7" width="26.5" height="26.5" fill="url(#lg1)" stroke="#6a6a6a" stroke-width="0.8"/>
<defs><linearGradient id="lgc" x1="0" y1="0" x2="1" y2="1"><stop offset="0" stop-color="#1f74bf"/><stop offset="0.6" stop-color="#4fb2ea"/><stop offset="1" stop-color="#2a86cc"/></linearGradient></defs>
<g transform="translate(12,9.8) skewX(-8)"><path d="M5.8,-5.2 Q3.5,-7.6 0.5,-7.6 Q-6.2,-7.6 -6.2,0 Q-6.2,7.6 0.5,7.6 Q3.5,7.6 5.8,5.2 L3.6,3.2 Q2.4,4.4 0.8,4.4 Q-2.6,4.4 -2.6,0 Q-2.6,-4.4 0.8,-4.4 Q2.4,-4.4 3.6,-3.2 Z" fill="url(#lgc)"/></g>
<path d="M21,12 L24.5,12 L22.75,13.8 Z" fill="#333"/>
<text x="13.5" y="25" font-size="5.5" font-weight="bold" fill="#222" text-anchor="middle" font-family="Liberation Sans">C3D</text>
<path d="M33,3.3 L41,3.3 L44.2,6.3 L44.2,11.3 L33,11.3 Z" fill="#e2e4e8"/>
<path d="M41,3.3 L41,6.3 L44.2,6.3" fill="#b0b4bb"/>
<path d="M49,4 L53,4 L54,5 L59,5 L59,12 L49,12 Z" fill="#c9ccd2"/><path d="M50.5,7.5 L60,7.5 L58.5,12 L49,12 Z" fill="#e6e8eb"/>
<rect x="65" y="2" width="11" height="10.7" rx="0.8" fill="#c6c9cf"/><rect x="67.5" y="2.5" width="6" height="3.5" fill="#22262f"/><rect x="67" y="8" width="7" height="4.2" fill="#f0f0f0"/>
<rect x="82" y="2" width="7" height="10" fill="#8d929b"/><path d="M85,9 L91.5,9 L91.5,12.3 L85,12.3 Z" fill="#d7b24a"/>
<rect x="99" y="2" width="8" height="10.3" rx="1" fill="#7f8893"/><path d="M96.5,6.5 L102,6.5 L102,5 L104.5,7.2 L102,9.4 L102,8 L96.5,8 Z" fill="#5fb0e6"/>
<rect x="116" y="2" width="6" height="3.5" fill="#e6e8eb"/><rect x="113" y="5" width="12" height="5" rx="1" fill="#c9cdd4"/><rect x="115.5" y="9" width="7" height="4" fill="#a9d0ec"/>
<path d="M129.5,7.5 L134,4.5 L134,6.3 Q139,6 140,10 Q137.5,8.5 134,8.8 L134,10.5 Z" fill="#d2d5db"/>
<path d="M144.8,7 L147.4,7 L146.1,8.5 Z" fill="#bbb"/>
<path d="M163.3,7.5 L158.8,4.5 L158.8,6.3 Q153.8,6 152.7,10 Q155.2,8.5 158.8,8.8 L158.8,10.5 Z" fill="#5d626b"/>
<path d="M169.4,7 L171.7,7 L170.5,8.5 Z" fill="#999"/>
<rect x="175.2" y="0.6" width="119" height="13.2" fill="#3b4150"/>
<g transform="translate(182.2,7)"><circle r="3.6" fill="#e8e8e8"/><circle r="1.6" fill="#3b4150"/>
<g stroke="#e8e8e8" stroke-width="1.6"><line x1="0" y1="-5" x2="0" y2="5"/><line x1="-5" y1="0" x2="5" y2="0"/><line x1="-3.6" y1="-3.6" x2="3.6" y2="3.6"/><line x1="-3.6" y1="3.6" x2="3.6" y2="-3.6"/></g><circle r="1.5" fill="#3b4150"/></g>
<path d="M287.8,6 L293,6 L290.4,9 Z" fill="#e8e8e8"/>
<rect x="297" y="4" width="5.4" height="1.2" fill="#e8e8e8"/><path d="M297,6.5 L302.4,6.5 L299.7,9.5 Z" fill="#e8e8e8"/>
<rect x="904" y="1" width="119" height="12.5" fill="#3a404e"/>
<path d="M897,4.5 L900,7 L897,9.5 Z" fill="#d0d0d0"/>
<circle cx="1030" cy="6.5" r="3.2" fill="none" stroke="#cfd2d8" stroke-width="1.2"/><line x1="1032.3" y1="8.8" x2="1035.5" y2="12" stroke="#cfd2d8" stroke-width="1.4"/>
<circle cx="1047.4" cy="5" r="2.8" fill="#e0e2e6"/><path d="M1041.7,12.5 Q1042,8.5 1047.4,8.5 Q1052.8,8.5 1053,12.5 Z" fill="#e0e2e6"/>
<path d="M1113,6.5 L1115.5,6.5 L1114.2,8 Z" fill="#ccc"/>
<path d="M1124.3,3 L1126,3 L1127,9.5 L1132.6,9.5 L1133,5 L1126.5,5" fill="none" stroke="#b8bcc3" stroke-width="1.2"/><circle cx="1127.5" cy="11.5" r="0.8" fill="#b8bcc3"/><circle cx="1131.5" cy="11.5" r="0.8" fill="#b8bcc3"/>
<g stroke="#d8dadf" stroke-width="1.4" fill="none"><path d="M1144.2,4 L1140,11 L1148.5,11 Z"/></g><circle cx="1144.2" cy="4" r="1.3" fill="#d8dadf"/><circle cx="1140" cy="11" r="1.3" fill="#d8dadf"/><circle cx="1148.5" cy="11" r="1.3" fill="#d8dadf"/>
<path d="M1154,6.5 L1156.5,6.5 L1155.2,8 Z" fill="#ccc"/>
<rect x="1163.3" y="0" width="0.8" height="15" fill="#3a3f4a"/>
<circle cx="1175.4" cy="7.6" r="5.6" fill="#dfe1e5"/><text x="1175.4" y="10.6" font-size="8.5" font-weight="bold" fill="#3a3f4a" text-anchor="middle" font-family="Liberation Sans">?</text>
<path d="M1185.7,6.5 L1188.4,6.5 L1187,8 Z" fill="#ccc"/>
<rect x="1236" y="10.4" width="5.5" height="1.3" fill="#d0d3d8"/>
<rect x="1250.8" y="7" width="6.5" height="5" fill="none" stroke="#d0d3d8" stroke-width="1"/><path d="M1253,7 L1253,4.6 L1260,4.6 L1260,9.5 L1257.3,9.5" fill="none" stroke="#d0d3d8" stroke-width="1"/>
<path d="M1267.4,4 L1275.3,12 M1275.3,4 L1267.4,12" stroke="#dfe1e5" stroke-width="1.3"/>
<rect x="587.2" y="18" width="39.5" height="12" fill="#3e4356"/>
<rect x="764.7" y="20" width="10.3" height="6" fill="#ececec"/><path d="M768,24.5 L770,22.5 L772,24.5 Z" fill="#666"/><path d="M777.6,22.5 L780.5,22.5 L779,24 Z" fill="#ddd"/>

<rect x="0" y="29.7" width="1.3" height="65" fill="#2a2f3a"/>
<rect x="56" y="31" width="0.9" height="63" fill="#303644"/>
<path d="M19.8,37 L22.5,37 L24.5,47.8 L35,47.8" fill="none" stroke="#eceef1" stroke-width="1.5"/><path d="M23,38.5 L37.4,38.5 L36,43.5 L24,43.5 Z" fill="#eceef1"/>
<circle cx="24.2" cy="52" r="1.3" fill="#eceef1"/>
<rect x="27.9" y="44.8" width="10.3" height="9" fill="#f4f6f8" stroke="#3a4b66" stroke-width="0.6"/>
<g fill="#3a78b8"><rect x="29" y="46.5" width="1.5" height="1.5"/><rect x="29" y="49.3" width="1.5" height="1.5"/></g>
<g fill="#9aa6b8"><rect x="31.5" y="46.7" width="5.5" height="1"/><rect x="31.5" y="49.5" width="5.5" height="1"/><rect x="31.5" y="52" width="5.5" height="0.8"/></g>
<rect x="73" y="34.9" width="20.6" height="21" fill="#020402"/>
<circle cx="83.3" cy="45.4" r="8.3" fill="#083808" stroke="#3aa03a" stroke-width="0.9" stroke-dasharray="0.9 1.8"/>
<rect x="82" y="43.5" width="1.8" height="3" fill="#9fdf9f"/>

<path d="M14,113.5 L19,96 L92,96 L96.5,113.5 Z" fill="#30353f"/>
<path d="M96.5,113.5 L101.5,96 L175,96 L180,113.5 Z" fill="#3a4050"/>
<path d="M164.5,101.5 L169.5,106.5 M169.5,101.5 L164.5,106.5" stroke="#c6c9cf" stroke-width="1.1"/>
<path d="M187.5,105 L194,105 M190.75,101.7 L190.75,108.3" stroke="#b8bcc4" stroke-width="1.2"/>

<rect x="3" y="117.9" width="144" height="10.5" rx="1" fill="#2c313b"/>
<rect x="4.1" y="120.2" width="1.8" height="6.5" fill="#8a8f98"/>
<rect x="3" y="134.9" width="11" height="10.5" fill="#dfe3e6"/><rect x="4.3" y="136.2" width="8.4" height="7.9" fill="#3cb54a"/>
<g fill="#c9ccd2"><rect x="97.9" y="134.9" width="3.5" height="3.5"/><rect x="97.9" y="139.5" width="4" height="5.3"/><rect x="103" y="139.5" width="4.9" height="5.3"/><path d="M102.5,135.5 L106,135.5 L106,138.5" fill="none" stroke="#c9ccd2" stroke-width="0.9"/></g>
<rect x="115" y="134.9" width="11" height="9.3" fill="#c9ccd2"/><rect x="116.5" y="136.3" width="2" height="6.5" fill="#e6e8eb"/><rect x="121.5" y="139.5" width="3" height="3.5" fill="#3e4356"/>
<circle cx="138.6" cy="139.9" r="5.6" fill="#dcdfe3"/><text x="138.6" y="143" font-size="8.5" font-weight="bold" fill="#5a606b" text-anchor="middle" font-family="Liberation Sans">?</text>
<rect x="0" y="150" width="147.7" height="13.6" fill="#dcdee2" stroke="#b9bcc2" stroke-width="0.6"/>
<path d="M139.2,155.3 L142,158.3 L144.8,155.3" fill="none" stroke="#666" stroke-width="1"/>
<rect x="148.3" y="115" width="14.2" height="96.5" fill="#414859"/>
<rect x="148.3" y="211.5" width="14.2" height="236" fill="#2c313c"/>
<rect x="0" y="165.3" width="147.7" height="438.5" fill="#ffffff"/>
<rect x="0.5" y="609" width="147" height="61.7" fill="#3e4356" stroke="#7e8594" stroke-width="1"/>

<text x="0" y="0" transform="translate(159,190) rotate(-90)" font-size="8.6" fill="#e4e6ea" textLength="37.599999999999994" lengthAdjust="spacingAndGlyphs" font-family="Liberation Sans">Prospector</text>
<text x="0" y="0" transform="translate(159,267) rotate(-90)" font-size="8.6" fill="#b4b9c1" textLength="28.400000000000006" lengthAdjust="spacingAndGlyphs" font-family="Liberation Sans">Settings</text>
<text x="0" y="0" transform="translate(159,344) rotate(-90)" font-size="8.6" fill="#b4b9c1" textLength="23.600000000000023" lengthAdjust="spacingAndGlyphs" font-family="Liberation Sans">Survey</text>
<text x="0" y="0" transform="translate(159,427.3) rotate(-90)" font-size="8.6" fill="#b4b9c1" textLength="27.69999999999999" lengthAdjust="spacingAndGlyphs" font-family="Liberation Sans">Toolbox</text>
<line x1="10" y1="177" x2="10" y2="382.7" stroke="#c8c8c8" stroke-width="0.8"/>
<line x1="22.5" y1="179" x2="22.5" y2="373.40000000000003" stroke="#c8c8c8" stroke-width="0.8"/>
<line x1="22.5" y1="392.7" x2="22.5" y2="466.5" stroke="#c8c8c8" stroke-width="0.8"/>
<line x1="10" y1="174.0" x2="17" y2="174.0" stroke="#c8c8c8" stroke-width="0.8"/>
<rect x="6.7" y="171.0" width="6" height="6" fill="#fff" stroke="#9a9a9a" stroke-width="0.7"/><line x1="8.2" y1="174.0" x2="11.2" y2="174.0" stroke="#555" stroke-width="0.7"/>
<line x1="22.5" y1="187.2" x2="28" y2="187.2" stroke="#c8c8c8" stroke-width="0.8"/>
<line x1="22.5" y1="200.5" x2="28" y2="200.5" stroke="#c8c8c8" stroke-width="0.8"/>
<line x1="22.5" y1="213.79999999999998" x2="28" y2="213.79999999999998" stroke="#c8c8c8" stroke-width="0.8"/>
<line x1="22.5" y1="227.1" x2="28" y2="227.1" stroke="#c8c8c8" stroke-width="0.8"/>
<line x1="22.5" y1="240.39999999999998" x2="28" y2="240.39999999999998" stroke="#c8c8c8" stroke-width="0.8"/>
<line x1="22.5" y1="253.7" x2="28" y2="253.7" stroke="#c8c8c8" stroke-width="0.8"/>
<line x1="22.5" y1="267.0" x2="28" y2="267.0" stroke="#c8c8c8" stroke-width="0.8"/>
<line x1="22.5" y1="280.3" x2="28" y2="280.3" stroke="#c8c8c8" stroke-width="0.8"/>
<line x1="22.5" y1="293.59999999999997" x2="28" y2="293.59999999999997" stroke="#c8c8c8" stroke-width="0.8"/>
<line x1="22.5" y1="306.9" x2="28" y2="306.9" stroke="#c8c8c8" stroke-width="0.8"/>
<line x1="22.5" y1="320.2" x2="28" y2="320.2" stroke="#c8c8c8" stroke-width="0.8"/>
<line x1="22.5" y1="333.5" x2="28" y2="333.5" stroke="#c8c8c8" stroke-width="0.8"/>
<line x1="22.5" y1="346.8" x2="28" y2="346.8" stroke="#c8c8c8" stroke-width="0.8"/>
<line x1="22.5" y1="360.09999999999997" x2="28" y2="360.09999999999997" stroke="#c8c8c8" stroke-width="0.8"/>
<line x1="22.5" y1="373.40000000000003" x2="28" y2="373.40000000000003" stroke="#c8c8c8" stroke-width="0.8"/>
<line x1="10" y1="386.7" x2="17" y2="386.7" stroke="#c8c8c8" stroke-width="0.8"/>
<rect x="6.7" y="383.7" width="6" height="6" fill="#fff" stroke="#9a9a9a" stroke-width="0.7"/><line x1="8.2" y1="386.7" x2="11.2" y2="386.7" stroke="#555" stroke-width="0.7"/>
<line x1="22.5" y1="400.0" x2="28" y2="400.0" stroke="#c8c8c8" stroke-width="0.8"/>
<line x1="22.5" y1="413.3" x2="28" y2="413.3" stroke="#c8c8c8" stroke-width="0.8"/>
<line x1="22.5" y1="426.59999999999997" x2="28" y2="426.59999999999997" stroke="#c8c8c8" stroke-width="0.8"/>
<line x1="22.5" y1="439.90000000000003" x2="28" y2="439.90000000000003" stroke="#c8c8c8" stroke-width="0.8"/>
<line x1="22.5" y1="453.2" x2="28" y2="453.2" stroke="#c8c8c8" stroke-width="0.8"/>
<line x1="22.5" y1="466.5" x2="28" y2="466.5" stroke="#c8c8c8" stroke-width="0.8"/>
<rect x="19.5" y="224.1" width="6" height="6" fill="#fff" stroke="#9a9a9a" stroke-width="0.7"/><line x1="21.0" y1="227.1" x2="24.0" y2="227.1" stroke="#555" stroke-width="0.7"/>
<line x1="22.5" y1="225.6" x2="22.5" y2="228.6" stroke="#555" stroke-width="0.7"/>
<rect x="19.5" y="277.3" width="6" height="6" fill="#fff" stroke="#9a9a9a" stroke-width="0.7"/><line x1="21.0" y1="280.3" x2="24.0" y2="280.3" stroke="#555" stroke-width="0.7"/>
<line x1="22.5" y1="278.8" x2="22.5" y2="281.8" stroke="#555" stroke-width="0.7"/>
<rect x="19.5" y="330.5" width="6" height="6" fill="#fff" stroke="#9a9a9a" stroke-width="0.7"/><line x1="21.0" y1="333.5" x2="24.0" y2="333.5" stroke="#555" stroke-width="0.7"/>
<line x1="22.5" y1="332.0" x2="22.5" y2="335.0" stroke="#555" stroke-width="0.7"/>
<rect x="19.5" y="357.09999999999997" width="6" height="6" fill="#fff" stroke="#9a9a9a" stroke-width="0.7"/><line x1="21.0" y1="360.09999999999997" x2="24.0" y2="360.09999999999997" stroke="#555" stroke-width="0.7"/>
<line x1="22.5" y1="358.59999999999997" x2="22.5" y2="361.59999999999997" stroke="#555" stroke-width="0.7"/>
<rect x="19.5" y="410.3" width="6" height="6" fill="#fff" stroke="#9a9a9a" stroke-width="0.7"/><line x1="21.0" y1="413.3" x2="24.0" y2="413.3" stroke="#555" stroke-width="0.7"/>
<line x1="22.5" y1="411.8" x2="22.5" y2="414.8" stroke="#555" stroke-width="0.7"/>
<g transform="translate(22.5,174.0)" fill="#fff" stroke="#8c9096" stroke-width="0.9"><path d="M-5,-4 L2,-4 L5,-1 L5,4 L-5,4 Z"/></g>
<g transform="translate(35,187.2)" fill="none" stroke="#8c9096" stroke-width="0.9"><path d="M0,-5 L5,0 L0,5 L-5,0 Z"/><path d="M0,-3 V3 M-3,0 H3"/></g>
<g transform="translate(35,200.5)" fill="none" stroke="#8c9096" stroke-width="0.9"><path d="M-3.5,-5 H-5 V5 H-3.5 M3.5,-5 H5 V5 H3.5"/><path d="M0,-3 L3,0 L0,3 L-3,0 Z"/></g>
<g transform="translate(35,213.8)" fill="none" stroke="#8c9096" stroke-width="0.9"><path d="M-5,4.5 L-5,-1 L0,-5 L5,-1 L5,4.5 Z"/><circle r="2.2" cy="0.5"/></g>
<g transform="translate(35,227.1)" fill="none" stroke="#8c9096" stroke-width="0.9"><path d="M-5,-3 H1 Q5,-3 5,0.5 Q5,4 1,4 H-4" stroke="#6f8eaa" stroke-dasharray="1.5 1.2"/></g>
<g transform="translate(35,240.4)" fill="none" stroke="#8c9096" stroke-width="0.9"><path d="M-5,4.5 Q3,4 3.5,-4" stroke="#444"/><path d="M2,-3 L3.5,-5 L5,-3" stroke="#444"/></g>
<g transform="translate(35,253.7)" fill="none" stroke="#8c9096" stroke-width="0.9"><rect x="-5" y="-4.5" width="10" height="9" fill="#e8eef4"/><rect x="1" y="-4.5" width="4" height="4" fill="#3f8fd6" stroke="none"/><path d="M-2,-1 V4.5 M1,0 V4.5 M-5,1 H5"/></g>
<g transform="translate(35,267.0)" fill="none" stroke="#8c9096" stroke-width="0.9"><rect x="-5" y="-5" width="10" height="10" fill="#6ec36e" stroke="#777"/><path d="M-5,1 L0,-1 L5,2 L5,5 L-5,5 Z" fill="#e9a65a" stroke="none"/><rect x="-4.5" y="-4.5" width="4" height="4" fill="#3e90d8" stroke="none"/></g>
<g transform="translate(35,280.3)" fill="none" stroke="#8c9096" stroke-width="0.9"><path d="M-5,5 V-3 Q-5,-5 -3,-5 H-1 V3 H1 V-5 H3 Q5,-5 5,-3 V5" stroke="#666" stroke-width="1.2"/></g>
<g transform="translate(35,293.6)" fill="none" stroke="#8c9096" stroke-width="0.9"><path d="M-5,5 V-3 Q-5,-5 -3,-5 H-1 V3 H1 V-5 H3 Q5,-5 5,-3 V5" stroke="#666" stroke-width="1.2"/></g>
<g transform="translate(35,306.9)" fill="none" stroke="#8c9096" stroke-width="0.9"><path d="M-5,-1 H5 M-5,1.5 H5 M-3,-3 V3 M0,-3 V3 M3,-3 V3" stroke="#666"/></g>
<g transform="translate(35,320.2)" fill="none" stroke="#8c9096" stroke-width="0.9"><path d="M-4,5 L-1,-5 L1,-5 Q4,2 5,5 Z" fill="#8a7a55" stroke="#6b5e40"/></g>
<g transform="translate(35,333.5)" fill="none" stroke="#8c9096" stroke-width="0.9"><rect x="-5" y="0" width="10" height="4.5"/><path d="M-3.5,0 V-3 Q0,-5.5 3.5,-3 V0" /><path d="M0,-4.5 V4.5 M-5,2 H5"/></g>
<g transform="translate(35,346.8)" fill="none" stroke="#8c9096" stroke-width="0.9"><circle r="4.8" fill="#e4e4e4" stroke="#666"/><path d="M-4.8,-1 H4.8 M-4.8,1.5 H4.8 M-1.5,-4.8 V4.8 M1.5,-4.8 V4.8" stroke="#666"/></g>
<g transform="translate(35,360.1)" fill="none" stroke="#8c9096" stroke-width="0.9"><path d="M0,-3 L-4.5,5 M0,-3 L4.5,5 M0,-3 V5 M-3,-5 H3" stroke="#555" stroke-width="1.1"/></g>
<g transform="translate(35,373.4)" fill="none" stroke="#8c9096" stroke-width="0.9"><rect x="-5" y="-5" width="10" height="10" fill="#dce8f2" stroke="#777"/><path d="M-3,-3 L1,1 L-2,2 Z" fill="#2b6fb0" stroke="none"/></g>
<g transform="translate(23,386.7)" fill="#eee" stroke="#8c9096" stroke-width="0.9"><ellipse cx="0" cy="-3.5" rx="5" ry="2"/><path d="M-5,-3.5 V4 Q0,6.5 5,4 V-3.5"/><rect x="1.5" y="0.5" width="4.5" height="4.5" fill="#fff"/></g>
<g transform="translate(35,400.0)" fill="none" stroke="#8c9096" stroke-width="0.9"><path d="M-5,4.5 L-5,-1 L0,-5 L5,-1 L5,1"/><rect x="1.5" y="0.5" width="4.5" height="4.5" fill="#fff" stroke="#777"/></g>
<g transform="translate(35,413.3)" fill="none" stroke="#8c9096" stroke-width="0.9"><path d="M-5,-3 H1 Q4,-3 4,-1" stroke="#6f8eaa" stroke-dasharray="1.5 1.2"/><rect x="1.5" y="0.5" width="4.5" height="4.5" fill="#fff" stroke="#777"/></g>
<g transform="translate(35,426.6)" fill="none" stroke="#8c9096" stroke-width="0.9"><path d="M-5,5 V-3 Q-5,-5 -3,-5 H-1 V3 M1,-5 H3 Q5,-5 5,-3 V0" stroke="#666" stroke-width="1.1"/><rect x="1.5" y="0.5" width="4.5" height="4.5" fill="#fff" stroke="#777"/></g>
<g transform="translate(35,439.9)" fill="none" stroke="#8c9096" stroke-width="0.9"><path d="M-5,5 V-3 Q-5,-5 -3,-5 H-1 V3 M1,-5 H3 Q5,-5 5,-3 V0" stroke="#666" stroke-width="1.1"/><rect x="1.5" y="0.5" width="4.5" height="4.5" fill="#fff" stroke="#777"/></g>
<g transform="translate(35,453.2)" fill="none" stroke="#8c9096" stroke-width="0.9"><path d="M-4,5 L-1,-5 L1,-5 Q3,-1 4,0" fill="#8a7a55" stroke="#6b5e40"/><rect x="1.5" y="0.5" width="4.5" height="4.5" fill="#fff" stroke="#777"/></g>
<g transform="translate(35,466.5)" fill="none" stroke="#8c9096" stroke-width="0.9"><rect x="-5" y="-5" width="9" height="10" fill="#dce8f2" stroke="#777"/><path d="M-3,-3 L1,1 L-2,2 Z" fill="#2b6fb0" stroke="none"/><rect x="1.5" y="0.5" width="4.5" height="4.5" fill="#fff" stroke="#777"/></g>
<rect x="0" y="674" width="1280" height="17.8" fill="#222833"/>
<rect x="0" y="691.8" width="1280" height="28.2" fill="#2e3447"/>
<path d="M9,688 L13,675.5 L41,675.5 L45,688 Z" fill="#3e4356"/>
<path d="M47.5,688 L51.5,675.5 L83.5,675.5 L87.5,688 Z" fill="#2f3441"/>
<path d="M97.3,681.5 L102.7,681.5 M100,678.8 L100,684.2" stroke="#c9cdd3" stroke-width="1.3"/>
<rect x="838" y="675" width="442" height="16" fill="#2d313b"/>

<rect x="919" y="675" width="1.5" height="16" fill="#1f2229"/>
<rect x="1129" y="675" width="1.5" height="16" fill="#1f2229"/>
<rect x="1158" y="675" width="1.5" height="16" fill="#1f2229"/>
<rect x="1176" y="675" width="1.5" height="16" fill="#1f2229"/>
<rect x="1211" y="675" width="1.5" height="16" fill="#1f2229"/>
<rect x="1228.5" y="675" width="1.5" height="16" fill="#1f2229"/>
<rect x="1245" y="675" width="1.5" height="16" fill="#1f2229"/>
<rect x="874.5" y="675" width="1.5" height="16" fill="#1f2229"/>
<rect x="936.6" y="676" width="15.399999999999977" height="14.7" fill="#5283b9"/>
<rect x="991.5" y="676" width="14.200000000000045" height="14.7" fill="#5283b9"/>
<rect x="1006.7" y="676" width="15.299999999999955" height="14.7" fill="#5283b9"/>
<rect x="1034" y="676" width="15" height="14.7" fill="#5283b9"/>
<rect x="1052.4" y="676" width="14.199999999999818" height="14.7" fill="#5283b9"/>
<g stroke="#dfe2e6" stroke-width="1" fill="none">
<path d="M880,679 V688 M883.5,679 V688 M887,679 V688 M878,680.5 H889 M878,683.5 H889 M878,686.5 H889"/>
<g fill="#dfe2e6" stroke="none"><rect x="895.0" y="679.0" width="1.4" height="1.4"/><rect x="895.0" y="682.6" width="1.4" height="1.4"/><rect x="895.0" y="686.2" width="1.4" height="1.4"/><rect x="898.6" y="679.0" width="1.4" height="1.4"/><rect x="898.6" y="682.6" width="1.4" height="1.4"/><rect x="898.6" y="686.2" width="1.4" height="1.4"/><rect x="902.2" y="679.0" width="1.4" height="1.4"/><rect x="902.2" y="682.6" width="1.4" height="1.4"/><rect x="902.2" y="686.2" width="1.4" height="1.4"/></g>
<path d="M911,682 L915,682 L913,684.5 Z" fill="#dfe2e6" stroke="none"/>
<path d="M923.5,678 V689 H933.5"/><path d="M923.5,686.5 H926 V689" stroke-width="0.8"/>
<circle cx="944" cy="683.5" r="4.2"/><path d="M944,683.5 L949,679.5"/>
<path d="M956,682 L960,682 L958,684.5 Z" fill="#dfe2e6" stroke="none"/>
<path d="M966,678 L976,689 M976,678 L966,689" stroke="#8a9a8a"/>
<path d="M982,682 L986,682 L984,684.5 Z" fill="#dfe2e6" stroke="none"/>
<path d="M993.5,688.5 H1004 M993.5,688.5 L1003,680"/>
<rect x="1009.5" y="679.5" width="10" height="9"/><rect x="1008.5" y="678.5" width="3" height="3" fill="#dfe2e6"/>
<path d="M1025.5,682 L1029.5,682 L1027.5,684.5 Z" fill="#dfe2e6" stroke="none"/>
<rect x="1039" y="681" width="8" height="8" fill="#dfe2e6"/><path d="M1036,679 L1038,681"/>
<path d="M1054.5,689 L1059.5,678.5 L1064.5,689 M1059.5,678.5 V686" stroke-width="1.6"/><circle cx="1063" cy="680" r="1.8"/>
<path d="M1071.5,689 L1076,679 L1080.5,689 M1076,679 V686" stroke-width="1.6"/><path d="M1080,678 L1081,681 L1083,680"/>
<path d="M1088.5,689 L1092,679 L1095.5,689 M1092,679 V686" stroke-width="1.6"/>
<path d="M1121.8,681.5 L1126.7,681.5 L1124.2,684.3 Z" fill="#dfe2e6" stroke="none"/>
<circle cx="1139" cy="682.5" r="3.2" stroke-width="2.2"/>
<path d="M1139,677.3 V687.7 M1133.8,682.5 H1144.2 M1135.3,678.8 L1142.7,686.2 M1135.3,686.2 L1142.7,678.8" stroke-width="1.5"/>
<path d="M1150,681.5 L1154.8,681.5 L1152.4,684.3 Z" fill="#dfe2e6" stroke="none"/>
<path d="M1161,682.5 H1172.4 M1166.7,677 V688" stroke-width="1.3"/>
<path d="M1180,684.5 L1185.3,681.5 L1190.7,684.5 L1185.3,687.5 Z" fill="#cfe0f0"/><path d="M1180,681.5 L1185.3,678 L1190.7,681.5 L1185.3,685 Z" fill="#4a90d0" stroke="#cfe0f0"/>
<rect x="1214.5" y="677.5" width="4.5" height="4.5"/><circle cx="1224" cy="681" r="2.3"/><path d="M1219,684.5 L1216,689 H1222 Z"/>
<rect x="1233" y="684.5" width="4.5" height="4.5" fill="#e0b030" stroke="none"/><path d="M1238,686 L1240,688.5 L1243,683.5" stroke="#6cc070" stroke-width="1.3"/>
<path d="M1232,681 H1242 M1234.5,679 V683 M1239.5,679 V683" stroke="#4a90d0" stroke-width="1.3"/>
<rect x="1249.5" y="677.5" width="10.5" height="9"/><path d="M1252,684.5 L1257.5,679.5"/>
<path d="M1265,678.5 H1276.5 M1265,682.5 H1276.5 M1265,686.5 H1276.5" stroke-width="1.3"/>
</g>
<rect x="1259" y="115" width="21" height="559" fill="#252a35"/>
<rect x="1262.5" y="115" width="15" height="420" fill="#2f3440"/>
<rect x="1264" y="117" width="9" height="2.5" fill="#7d838e"/>

<path d="M1264.5,124.0 H1275 M1264.5,124.0 V133.0" stroke="#d9dce1" stroke-width="0.9" fill="none"/><path d="M1265.5,125.0 H1272 L1265.5,131.5 Z" fill="#eef0f2"/>
<path d="M1264.5,148.5 H1275 L1264.5,138.5" stroke="#d9dce1" stroke-width="0.9" fill="none"/><path d="M1266,141.5 L1271,145.5 L1266,146.5 Z" fill="#eef0f2"/>
<path d="M1266,154.3 L1266,162.8 M1266,154.8 Q1272,155.8 1270,159.8 L1272,162.8" stroke="#d9dce1" stroke-width="1.1" fill="none"/>
<path d="M1266,177.0 L1273,168.0 M1266,171.5 L1271,169.5" stroke="#d9dce1" stroke-width="1.1" fill="none" stroke-dasharray="2 1"/>
<rect x="1265" y="182" width="6" height="7" fill="#dfe2e6"/><rect x="1268.5" y="186" width="6.5" height="6" fill="#dfe2e6"/><g fill="#2f3440"><rect x="1269.5" y="187" width="1.8" height="1.8"/><rect x="1272.3" y="187" width="1.8" height="1.8"/><rect x="1269.5" y="189.6" width="1.8" height="1.8"/><rect x="1272.3" y="189.6" width="1.8" height="1.8"/></g>
<circle cx="1269" cy="202" r="4.8" fill="#3d94dc"/><path d="M1265.5,201 Q1269,198 1272,200 M1266,204 Q1269,206 1272.5,203" stroke="#a9d6f5" stroke-width="0.9" fill="none"/>
<rect x="1271" y="202.5" width="4.5" height="4.5" fill="#dfe2e6" stroke="#2f3440" stroke-width="0.5"/>
<circle cx="1269" cy="216.7" r="4.8" fill="#3d94dc"/><path d="M1265.5,215.7 Q1269,212.7 1272,214.7 M1266,218.7 Q1269,220.7 1272.5,217.7" stroke="#a9d6f5" stroke-width="0.9" fill="none"/>
<path d="M1268,226.7 L1269,229.7 L1272,230.7 L1269,231.7 L1268,234.7 L1267,231.7 L1264,230.7 L1267,229.7 Z" fill="none" stroke="#d9dce1" stroke-width="0.9"/>
<rect x="1271.5" y="232.7" width="3" height="3" fill="#8ab8e0"/>
<path d="M1268,241.7 L1269,244.7 L1272,245.7 L1269,246.7 L1268,249.7 L1267,246.7 L1264,245.7 L1267,244.7 Z" fill="none" stroke="#d9dce1" stroke-width="0.9"/>
<path d="M1271,251.2 L1273,246.7 L1275,251.2" stroke="#d9dce1" stroke-width="0.9" fill="none"/>
<path d="M1268,256.7 L1269,259.7 L1272,260.7 L1269,261.7 L1268,264.7 L1267,261.7 L1264,260.7 L1267,259.7 Z" fill="none" stroke="#d9dce1" stroke-width="0.9"/>
<path d="M1270.5,261.2 L1275.5,265.2 L1273,265.4 L1274,267.2 L1272.8,267.5 L1272,265.7 L1270.5,267.2 Z" fill="#eef0f2"/>
<path d="M1268,270.9 L1269,273.9 L1272,274.9 L1269,275.9 L1268,278.9 L1267,275.9 L1264,274.9 L1267,273.9 Z" fill="none" stroke="#d9dce1" stroke-width="0.9"/>
<circle cx="1272" cy="277.4" r="2" fill="none" stroke="#d9dce1" stroke-width="0.9"/><path d="M1273.5,278.9 L1275.5,280.9" stroke="#d9dce1" stroke-width="1"/>
<path d="M1265,285 V295 M1267,287 H1273 V293 H1267 Z" stroke="#d9dce1" stroke-width="0.9" fill="none"/><path d="M1267,293 L1273,287" stroke="#d9dce1" stroke-width="0.8"/>
<path d="M1265,300.5 H1272 Q1275,300.5 1275,303.5 Q1275,306.5 1272,306.5 H1269 M1268,298.5 V308.5" stroke="#a9cdea" stroke-width="1" fill="none"/>
<rect x="1264" y="313" width="11" height="1" fill="#9aa0aa"/>
<path d="M1268,318.5 L1269,321.5 L1272,322.5 L1269,323.5 L1268,326.5 L1267,323.5 L1264,322.5 L1267,321.5 Z" fill="none" stroke="#d9dce1" stroke-width="0.9"/>
<path d="M1270.5,323 L1275.5,327 L1273,327.2 L1274,329 L1272.8,329.3 L1272,327.5 L1270.5,329 Z" fill="#eef0f2"/>
<rect x="1264" y="332.5" width="11" height="1" fill="#9aa0aa"/>
<path d="M1266,337.8 Q1266,341.8 1270,341.8 Q1275,341.8 1274,344.8 Q1272,346.8 1267,345.8" stroke="#a9cdea" stroke-width="1" fill="none" stroke-dasharray="1.5 1"/>
<circle cx="1267.5" cy="355.5" r="2.6" fill="#dfe2e6"/><path d="M1269,359 Q1275,358 1274,361" stroke="#a9cdea" stroke-width="1" fill="none"/>
<path d="M1268,367.2 L1269,370.2 L1272,371.2 L1269,372.2 L1268,375.2 L1267,372.2 L1264,371.2 L1267,370.2 Z" fill="none" stroke="#d9dce1" stroke-width="0.9"/>
<path d="M1270,375.7 Q1276,376.7 1274,371.7 " stroke="#9ec8ea" stroke-width="0.9" fill="none"/>
<rect x="1264" y="380.8" width="11" height="1" fill="#9aa0aa"/>
<path d="M1265,384 V394 H1275 V389" stroke="#d9dce1" stroke-width="1" fill="none" stroke-dasharray="1 1"/>
<path d="M1266,409.5 V402.5 L1269,399.5 M1269,409.5 L1274,402.5 V409.5" stroke="#d9dce1" stroke-width="1" fill="none" stroke-dasharray="1 1"/>
<path d="M1265,423.5 H1275 M1265,423.5 L1270,417.5 L1275,422.5 M1265,413.5 V423.5" stroke="#d9dce1" stroke-width="1" fill="none" stroke-dasharray="1 1"/>
<path d="M1265,437 L1273,429 M1268,438 H1275" stroke="#d9dce1" stroke-width="1" fill="none"/>
<circle cx="1268.5" cy="447" r="4" fill="none" stroke="#d9dce1" stroke-width="1"/><path d="M1266,445 L1272,450" stroke="#d9dce1" stroke-width="0.9"/><rect x="1270.5" y="449" width="4.5" height="4" fill="#e7c85a"/>
<path d="M1266,466 L1274,458" stroke="#d9dce1" stroke-width="1"/><rect x="1268.5" y="463" width="6" height="5" fill="#e7c85a"/><rect x="1265" y="464" width="3" height="3" fill="#eef0f2"/>
<path d="M1265,482.8 Q1266,473.8 1274,472.8" stroke="#d9dce1" stroke-width="1" fill="none" stroke-dasharray="1.2 1"/><rect x="1270" y="475.8" width="5" height="6.5" fill="#7fb6e6" stroke="#eef0f2" stroke-width="0.6"/>
<rect x="1264" y="487.5" width="11" height="1" fill="#6a707a"/>
<path d="M1268,495.5 L1269,498.5 L1272,499.5 L1269,500.5 L1268,503.5 L1267,500.5 L1264,499.5 L1267,498.5 Z" fill="none" stroke="#d9dce1" stroke-width="0.9"/>
<path d="M1270.5,500 L1275.5,504 L1273,504.2 L1274,506 L1272.8,506.3 L1272,504.5 L1270.5,506 Z" fill="#eef0f2"/>
<path d="M1264.5,512 H1270 M1267.2,512 V519" stroke="#d9dce1" stroke-width="1.4"/><rect x="1265" y="508" width="3" height="3" fill="#d9dce1"/><rect x="1270.5" y="513" width="5" height="6" fill="none" stroke="#d9dce1" stroke-width="0.8"/>
<path d="M1268,524.5 L1269,527.5 L1272,528.5 L1269,529.5 L1268,532.5 L1267,529.5 L1264,528.5 L1267,527.5 Z" fill="none" stroke="#d9dce1" stroke-width="0.9"/>
<rect x="1271.5" y="530.5" width="3" height="3" fill="#8ab8e0"/>
<text x="37" y="26.2" font-size="9.16" font-weight="normal" font-style="normal" fill="#c3c7ce" textLength="22.0" lengthAdjust="spacingAndGlyphs" font-family="Liberation Sans">Home</text>
<text x="72" y="26.2" font-size="9.16" font-weight="normal" font-style="normal" fill="#c3c7ce" textLength="19.0" lengthAdjust="spacingAndGlyphs" font-family="Liberation Sans">Insert</text>
<text x="105" y="26.2" font-size="9.16" font-weight="normal" font-style="normal" fill="#c3c7ce" textLength="32.5" lengthAdjust="spacingAndGlyphs" font-family="Liberation Sans">Annotate</text>
<text x="150.75" y="26.2" font-size="9.16" font-weight="normal" font-style="normal" fill="#c3c7ce" textLength="25.2" lengthAdjust="spacingAndGlyphs" font-family="Liberation Sans">Modify</text>
<text x="189.5" y="26.2" font-size="9.16" font-weight="normal" font-style="normal" fill="#c3c7ce" textLength="27.2" lengthAdjust="spacingAndGlyphs" font-family="Liberation Sans">Analyze</text>
<text x="230" y="26.2" font-size="9.16" font-weight="normal" font-style="normal" fill="#c3c7ce" textLength="17.0" lengthAdjust="spacingAndGlyphs" font-family="Liberation Sans">View</text>
<text x="260" y="26.2" font-size="9.16" font-weight="normal" font-style="normal" fill="#c3c7ce" textLength="29.0" lengthAdjust="spacingAndGlyphs" font-family="Liberation Sans">Manage</text>
<text x="302" y="26.2" font-size="9.16" font-weight="normal" font-style="normal" fill="#c3c7ce" textLength="25.0" lengthAdjust="spacingAndGlyphs" font-family="Liberation Sans">Output</text>
<text x="340.75" y="26.2" font-size="9.16" font-weight="normal" font-style="normal" fill="#c3c7ce" textLength="23.2" lengthAdjust="spacingAndGlyphs" font-family="Liberation Sans">Survey</text>
<text x="377.5" y="26.2" font-size="9.16" font-weight="normal" font-style="normal" fill="#c3c7ce" textLength="12.5" lengthAdjust="spacingAndGlyphs" font-family="Liberation Sans">Rail</text>
<text x="403.75" y="26.2" font-size="9.16" font-weight="normal" font-style="normal" fill="#c3c7ce" textLength="40.0" lengthAdjust="spacingAndGlyphs" font-family="Liberation Sans">Transparent</text>
<text x="457" y="26.2" font-size="9.16" font-weight="normal" font-style="normal" fill="#c3c7ce" textLength="38.0" lengthAdjust="spacingAndGlyphs" font-family="Liberation Sans">InfraWorks</text>
<text x="508.75" y="26.2" font-size="9.16" font-weight="normal" font-style="normal" fill="#c3c7ce" textLength="40.2" lengthAdjust="spacingAndGlyphs" font-family="Liberation Sans">Collaborate</text>
<text x="562.5" y="26.2" font-size="9.16" font-weight="normal" font-style="normal" fill="#c3c7ce" textLength="16.5" lengthAdjust="spacingAndGlyphs" font-family="Liberation Sans">Help</text>
<text x="592.9" y="26.2" font-size="9.16" font-weight="normal" font-style="normal" fill="#f0f1f3" textLength="28.0" lengthAdjust="spacingAndGlyphs" font-family="Liberation Sans">Add-ins</text>
<text x="634" y="26.2" font-size="9.16" font-weight="normal" font-style="normal" fill="#c3c7ce" textLength="45.7" lengthAdjust="spacingAndGlyphs" font-family="Liberation Sans">Express Tools</text>
<text x="693.4" y="26.2" font-size="9.16" font-weight="normal" font-style="normal" fill="#c3c7ce" textLength="50.6" lengthAdjust="spacingAndGlyphs" font-family="Liberation Sans">Featured Apps</text>
<text x="525" y="10.6" font-size="9.30" font-weight="normal" font-style="normal" fill="#e6e8eb" textLength="79.7" lengthAdjust="spacingAndGlyphs" font-family="Liberation Sans">Autodesk Civil 3D 2021</text>
<text x="613.4" y="10.6" font-size="9.30" font-weight="normal" font-style="normal" fill="#e6e8eb" textLength="60.6" lengthAdjust="spacingAndGlyphs" font-family="Liberation Sans">PREDIO URB.dwg</text>
<text x="189" y="10.5" font-size="9.16" font-weight="normal" font-style="normal" fill="#e4e6ea" textLength="26.6" lengthAdjust="spacingAndGlyphs" font-family="Liberation Sans">Civil 3D</text>
<text x="905.3" y="9.6" font-size="8.14" font-weight="normal" font-style="italic" fill="#8f96a2" textLength="81.3" lengthAdjust="spacingAndGlyphs" font-family="Liberation Sans">Type a keyword or phrase</text>
<text x="1055.8" y="10.9" font-size="9.45" font-weight="normal" font-style="normal" fill="#e4e6ea" textLength="24.2" lengthAdjust="spacingAndGlyphs" font-family="Liberation Sans">Sign In</text>
<text x="4.7" y="66.1" font-size="9.30" font-weight="normal" font-style="normal" fill="#e8eaed" textLength="48.3" lengthAdjust="spacingAndGlyphs" font-family="Liberation Sans">App Manager</text>
<text x="70.8" y="66.1" font-size="9.30" font-weight="normal" font-style="normal" fill="#e8eaed" textLength="25.2" lengthAdjust="spacingAndGlyphs" font-family="Liberation Sans">SANEO</text>
<text x="4.7" y="91" font-size="8.72" font-weight="normal" font-style="normal" fill="#d6d9de" textLength="48.3" lengthAdjust="spacingAndGlyphs" font-family="Liberation Sans">App Manager</text>
<text x="60" y="91" font-size="8.72" font-weight="normal" font-style="normal" fill="#d6d9de" textLength="46.0" lengthAdjust="spacingAndGlyphs" font-family="Liberation Sans">Saneamiento</text>
<text x="21" y="108.9" font-size="8.87" font-weight="normal" font-style="normal" fill="#c3c7ce" textLength="16.5" lengthAdjust="spacingAndGlyphs" font-family="Liberation Sans">Start</text>
<text x="103" y="108.9" font-size="8.87" font-weight="normal" font-style="normal" fill="#e8eaed" textLength="47.0" lengthAdjust="spacingAndGlyphs" font-family="Liberation Sans">PREDIO URB*</text>
<text x="10.5" y="125.8" font-size="9.45" font-weight="normal" font-style="normal" fill="#d3d6db" textLength="41.0" lengthAdjust="spacingAndGlyphs" font-family="Liberation Sans">TOOLSPACE</text>
<text x="2" y="160.7" font-size="9.16" font-weight="normal" font-style="normal" fill="#1e1e1e" textLength="65.0" lengthAdjust="spacingAndGlyphs" font-family="Liberation Sans">Active Drawing View</text>
<text x="31.7" y="177.3" font-size="9.30" font-weight="bold" font-style="normal" fill="#141414" textLength="47.3" lengthAdjust="spacingAndGlyphs" font-family="Liberation Sans">PREDIO URB</text>
<text x="45.4" y="190.5" font-size="9.30" font-weight="normal" font-style="normal" fill="#141414" textLength="21.9" lengthAdjust="spacingAndGlyphs" font-family="Liberation Sans">Points</text>
<text x="45.4" y="203.8" font-size="9.30" font-weight="normal" font-style="normal" fill="#141414" textLength="45.6" lengthAdjust="spacingAndGlyphs" font-family="Liberation Sans">Point Groups</text>
<text x="45.4" y="217.1" font-size="9.30" font-weight="normal" font-style="normal" fill="#141414" textLength="29.3" lengthAdjust="spacingAndGlyphs" font-family="Liberation Sans">Surfaces</text>
<text x="45.4" y="230.4" font-size="9.30" font-weight="normal" font-style="normal" fill="#141414" textLength="40.4" lengthAdjust="spacingAndGlyphs" font-family="Liberation Sans">Alignments</text>
<text x="45.4" y="243.7" font-size="9.30" font-weight="normal" font-style="normal" fill="#141414" textLength="45.6" lengthAdjust="spacingAndGlyphs" font-family="Liberation Sans">Feature Lines</text>
<text x="45.4" y="257.0" font-size="9.30" font-weight="normal" font-style="normal" fill="#141414" textLength="15.8" lengthAdjust="spacingAndGlyphs" font-family="Liberation Sans">Sites</text>
<text x="45.4" y="270.3" font-size="9.30" font-weight="normal" font-style="normal" fill="#141414" textLength="42.6" lengthAdjust="spacingAndGlyphs" font-family="Liberation Sans">Catchments</text>
<text x="45.4" y="283.6" font-size="9.30" font-weight="normal" font-style="normal" fill="#141414" textLength="50.2" lengthAdjust="spacingAndGlyphs" font-family="Liberation Sans">Pipe Networks</text>
<text x="45.4" y="296.9" font-size="9.30" font-weight="normal" font-style="normal" fill="#141414" textLength="64.2" lengthAdjust="spacingAndGlyphs" font-family="Liberation Sans">Pressure Networks</text>
<text x="45.4" y="310.2" font-size="9.30" font-weight="normal" font-style="normal" fill="#141414" textLength="25.9" lengthAdjust="spacingAndGlyphs" font-family="Liberation Sans">Bridges</text>
<text x="45.4" y="323.5" font-size="9.30" font-weight="normal" font-style="normal" fill="#141414" textLength="32.5" lengthAdjust="spacingAndGlyphs" font-family="Liberation Sans">Corridors</text>
<text x="45.4" y="336.8" font-size="9.30" font-weight="normal" font-style="normal" fill="#141414" textLength="39.1" lengthAdjust="spacingAndGlyphs" font-family="Liberation Sans">Assemblies</text>
<text x="45.4" y="350.1" font-size="9.30" font-weight="normal" font-style="normal" fill="#141414" textLength="44.4" lengthAdjust="spacingAndGlyphs" font-family="Liberation Sans">Intersections</text>
<text x="45.4" y="363.4" font-size="9.30" font-weight="normal" font-style="normal" fill="#141414" textLength="23.2" lengthAdjust="spacingAndGlyphs" font-family="Liberation Sans">Survey</text>
<text x="45.4" y="376.70000000000005" font-size="9.30" font-weight="normal" font-style="normal" fill="#141414" textLength="68.1" lengthAdjust="spacingAndGlyphs" font-family="Liberation Sans">View Frame Groups</text>
<text x="32.2" y="390.0" font-size="9.30" font-weight="normal" font-style="normal" fill="#141414" textLength="58.8" lengthAdjust="spacingAndGlyphs" font-family="Liberation Sans">Data Shortcuts []</text>
<text x="45.4" y="403.3" font-size="9.30" font-weight="normal" font-style="normal" fill="#141414" textLength="29.3" lengthAdjust="spacingAndGlyphs" font-family="Liberation Sans">Surfaces</text>
<text x="45.4" y="416.6" font-size="9.30" font-weight="normal" font-style="normal" fill="#141414" textLength="40.4" lengthAdjust="spacingAndGlyphs" font-family="Liberation Sans">Alignments</text>
<text x="45.4" y="429.9" font-size="9.30" font-weight="normal" font-style="normal" fill="#141414" textLength="50.2" lengthAdjust="spacingAndGlyphs" font-family="Liberation Sans">Pipe Networks</text>
<text x="45.4" y="443.20000000000005" font-size="9.30" font-weight="normal" font-style="normal" fill="#141414" textLength="64.2" lengthAdjust="spacingAndGlyphs" font-family="Liberation Sans">Pressure Networks</text>
<text x="45.4" y="456.5" font-size="9.30" font-weight="normal" font-style="normal" fill="#141414" textLength="32.5" lengthAdjust="spacingAndGlyphs" font-family="Liberation Sans">Corridors</text>
<text x="45.4" y="469.8" font-size="9.30" font-weight="normal" font-style="normal" fill="#141414" textLength="68.1" lengthAdjust="spacingAndGlyphs" font-family="Liberation Sans">View Frame Groups</text>
<text x="15.5" y="683" font-size="8.43" font-weight="bold" font-style="normal" fill="#f4f5f7" textLength="23.2" lengthAdjust="spacingAndGlyphs" font-family="Liberation Sans">Model</text>
<text x="53.75" y="683" font-size="8.43" font-weight="normal" font-style="normal" fill="#b9bec6" textLength="27.5" lengthAdjust="spacingAndGlyphs" font-family="Liberation Sans">Layout1</text>
<text x="844.6" y="685.5" font-size="8.72" font-weight="normal" font-style="normal" fill="#dfe2e6" textLength="27.0" lengthAdjust="spacingAndGlyphs" font-family="Liberation Sans">MODEL</text>
<text x="1103.6" y="686" font-size="8.43" font-weight="normal" font-style="normal" fill="#d0d3d8" textLength="14.8" lengthAdjust="spacingAndGlyphs" font-family="Liberation Sans">1:1_1</text>
<text x="1198" y="686" font-size="8.43" font-weight="normal" font-style="normal" fill="#d0d3d8" textLength="9.8" lengthAdjust="spacingAndGlyphs" font-family="Liberation Sans">1.4</text>
<text x="456.6" y="715.3" font-size="15.55" font-weight="normal" font-style="normal" fill="#eef0f3" textLength="184.8" lengthAdjust="spacingAndGlyphs" font-family="Liberation Sans">ING. GUSLEIDY CAPCHA RICALDI</text>
<text x="711.7" y="715.3" font-size="15.55" font-weight="normal" font-style="normal" fill="#eef0f3" textLength="111.7" lengthAdjust="spacingAndGlyphs" font-family="Liberation Sans">CEL:+51 994330931</text>
</svg>
</body></html>
